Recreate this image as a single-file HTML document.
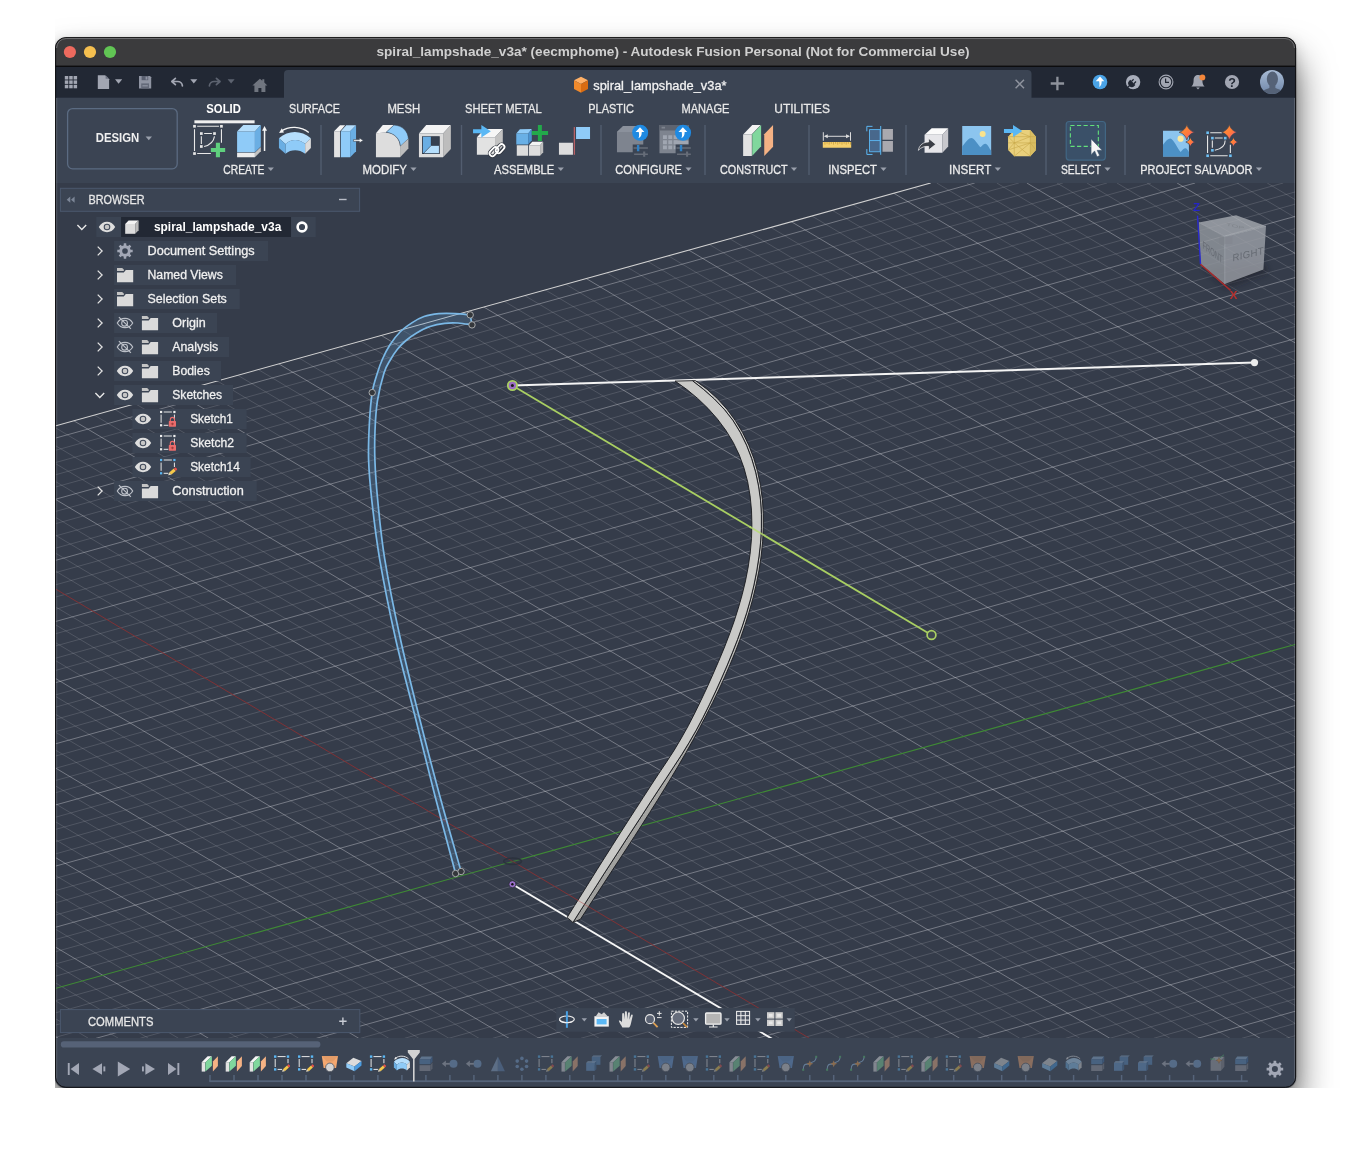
<!DOCTYPE html>
<html lang="en"><head><meta charset="utf-8"><title>spiral_lampshade_v3a* - Autodesk Fusion Personal</title>
<style>
html,body{margin:0;padding:0;background:#fff;width:1351px;height:1162px;overflow:hidden}
#clip{position:absolute;left:55px;top:0;width:1296px;height:1087.7px;overflow:hidden}
#shadow{position:absolute;left:0.4px;top:37.5px;width:1240.5px;height:1050px;border-radius:10.5px;
 box-shadow:0 22px 36px 0 rgba(0,0,0,.66), 0 3px 14px rgba(0,0,0,.14), 0 0 1.5px rgba(0,0,0,.6);background:#3b4453}
svg{position:absolute;left:0;top:0;will-change:transform}
text{font-family:"Liberation Sans", sans-serif;white-space:pre}
text.n{stroke-width:.28px}
</style></head><body>
<div id="clip"><div id="shadow"></div></div>
<svg width="1351" height="1162" viewBox="0 0 1351 1162">
<defs><clipPath id="win"><rect x="55.2" y="37.3" width="1240.8" height="1050.4" rx="10.5" ry="10.5"/></clipPath><linearGradient id="avg" x1="0" y1="0" x2="0" y2="1"><stop offset="0" stop-color="#a9bcd6"/><stop offset="1" stop-color="#6f86a8"/></linearGradient></defs>
<g clip-path="url(#win)">
<rect x="55" y="37" width="1241" height="30" fill="#3b3b3d"/>
<rect x="55" y="65.6" width="1241" height="1.4" fill="#0c0c0e"/>
<rect x="55" y="67" width="1241" height="31" fill="#222834"/>
<rect x="55" y="97.7" width="1241" height="86" fill="#3b4453"/>
<path d="M284 98 V74 a4 4 0 0 1 4 -4 H1027.5 a4 4 0 0 1 4 4 V98 Z" fill="#3b4453"/>
<rect x="55" y="183" width="1241" height="856" fill="#353c4a"/>
<clipPath id="cv"><rect x="55" y="183" width="1241" height="855.3"/></clipPath>
<linearGradient id="sideg" gradientUnits="userSpaceOnUse" x1="0" y1="381" x2="0" y2="921"><stop offset="0" stop-color="#c6c6c4"/><stop offset=".45" stop-color="#bcbcba"/><stop offset=".7" stop-color="#a6a6a4"/><stop offset="1" stop-color="#9e9e9c"/></linearGradient>
<g clip-path="url(#cv)">
<clipPath id="gridclip"><polygon points="55,426.01 1296,81.63 1296,1038.3 55,1038.3"/></clipPath>
<g clip-path="url(#gridclip)" fill="none">
<path d="M55 450.46L1018.83 183M55 462.69L1062.9 183M55 474.92L1106.97 183M55 487.15L1151.04 183M55 511.61L1239.17 183M55 523.84L1283.24 183M55 536.07L1296 191.69M55 548.3L1296 203.92M55 572.75L1296 228.38M55 584.98L1296 240.6M55 597.21L1296 252.83M55 609.44L1296 265.06M55 633.9L1296 289.52M55 646.13L1296 301.75M55 658.36L1296 313.98M55 670.59L1296 326.21M55 695.04L1296 350.67M55 707.27L1296 362.89M55 719.5L1296 375.12M55 731.73L1296 387.35M55 756.19L1296 411.81M55 768.42L1296 424.04M55 780.65L1296 436.27M55 792.88L1296 448.5M55 817.33L1296 472.96M55 829.56L1296 485.19M55 841.79L1296 497.41M55 854.02L1296 509.64M55 878.48L1296 534.1M55 890.71L1296 546.33M55 902.94L1296 558.56M55 915.17L1296 570.79M55 939.62L1296 595.25M55 951.85L1296 607.47M55 964.08L1296 619.7M55 976.31L1296 631.93M55 1000.77L1296 656.39M55 1013.0L1296 668.62M55 1025.23L1296 680.85M55 1037.46L1296 693.08M140.09 1038.3L1296 717.54M184.16 1038.3L1296 729.76M228.23 1038.3L1296 741.99M272.3 1038.3L1296 754.22M360.44 1038.3L1296 778.68M404.5 1038.3L1296 790.91M448.57 1038.3L1296 803.14M492.64 1038.3L1296 815.37M580.78 1038.3L1296 839.83M624.85 1038.3L1296 852.05M668.92 1038.3L1296 864.28M712.98 1038.3L1296 876.51M801.12 1038.3L1296 900.97M845.19 1038.3L1296 913.2M889.26 1038.3L1296 925.43M933.33 1038.3L1296 937.66M1021.46 1038.3L1296 962.12M1065.53 1038.3L1296 974.35M1109.6 1038.3L1296 986.57M1153.67 1038.3L1296 998.8M1241.81 1038.3L1296 1023.26M1285.87 1038.3L1296 1035.49M55 1018.41L88.37 1038.3M55 1000.51L118.41 1038.3M55 982.6L148.46 1038.3M55 964.69L178.5 1038.3M55 928.88L238.59 1038.3M55 910.97L268.64 1038.3M55 893.07L298.68 1038.3M55 875.16L328.73 1038.3M55 839.35L388.82 1038.3M55 821.44L418.86 1038.3M55 803.53L448.91 1038.3M55 785.63L478.95 1038.3M55 749.81L539.04 1038.3M55 731.91L569.09 1038.3M55 714.0L599.13 1038.3M55 696.09L629.17 1038.3M55 660.28L689.26 1038.3M55 642.37L719.31 1038.3M55 624.46L749.35 1038.3M55 606.56L779.4 1038.3M55 570.74L839.49 1038.3M55 552.84L869.53 1038.3M55 534.93L899.58 1038.3M55 517.02L929.62 1038.3M55 481.21L989.71 1038.3M55 463.3L1019.76 1038.3M55 445.4L1049.8 1038.3M55 427.49L1079.85 1038.3M55 391.68L1139.94 1038.3M55 373.77L1169.98 1038.3M55 355.86L1200.03 1038.3M55 337.96L1230.07 1038.3M55 302.14L1290.16 1038.3M55 284.24L1296 1023.87M55 266.33L1296 1005.97M55 248.42L1296 988.06M55 212.61L1296 952.25M55 194.7L1296 934.34M65.41 183L1296 916.43M95.45 183L1296 898.53M155.54 183L1296 862.71M185.59 183L1296 844.8M215.63 183L1296 826.9M245.68 183L1296 808.99M305.77 183L1296 773.18M335.81 183L1296 755.27M365.86 183L1296 737.36M395.9 183L1296 719.46M455.99 183L1296 683.64M486.04 183L1296 665.74M516.08 183L1296 647.83M546.13 183L1296 629.92M606.22 183L1296 594.11M636.26 183L1296 576.2M666.31 183L1296 558.3M696.35 183L1296 540.39M756.44 183L1296 504.58M786.49 183L1296 486.67M816.53 183L1296 468.76M846.58 183L1296 450.86M906.67 183L1296 415.04M936.71 183L1296 397.14M966.76 183L1296 379.23M996.8 183L1296 361.32M1056.89 183L1296 325.51M1086.94 183L1296 307.6M1116.98 183L1296 289.7M1147.03 183L1296 271.79M1207.12 183L1296 235.98M1237.16 183L1296 218.07M1267.2 183L1296 200.16" stroke="#d2d4d8" stroke-opacity=".175" stroke-width="1"/>
<path d="M55 438.23L974.76 183M55 499.38L1195.11 183M55 560.52L1296 216.15M55 621.67L1296 277.29M55 682.81L1296 338.44M55 743.96L1296 399.58M55 805.1L1296 460.73M55 866.25L1296 521.87M55 927.39L1296 583.02M96.03 1038.3L1296 705.31M316.37 1038.3L1296 766.45M536.71 1038.3L1296 827.6M757.05 1038.3L1296 888.74M977.39 1038.3L1296 949.89M1197.74 1038.3L1296 1011.03M55 1036.32L58.32 1038.3M55 946.79L208.55 1038.3M55 857.25L358.77 1038.3M55 767.72L509.0 1038.3M55 678.18L659.22 1038.3M55 499.12L959.67 1038.3M55 409.58L1109.89 1038.3M55 320.05L1260.12 1038.3M55 230.52L1296 970.15M125.5 183L1296 880.62M275.72 183L1296 791.08M425.95 183L1296 701.55M576.17 183L1296 612.02M726.4 183L1296 522.48M876.62 183L1296 432.95M1026.85 183L1296 343.42M1177.07 183L1296 253.88" stroke="#e4e5e8" stroke-opacity=".37" stroke-width="1"/>
<path d="M55 988.54L1296 644.16" stroke="#3f8a35" stroke-width="1.1"/>
<path d="M55 588.65L809.44 1038.3" stroke="#843034" stroke-width=".95"/>
</g>
<path d="M55 426.01L930.7 183" stroke="#d2d2d2" stroke-width="1.1" fill="none"/>
<ellipse cx="512.5999999999999" cy="861.3" rx="9" ry="3.3" fill="#2b313c" fill-opacity=".25" stroke="#2b313c" stroke-width="1.5" opacity=".9"/>
<path d="M470.2 314.9C467.7 314.7 460.2 313.8 455.0 313.6C449.8 313.4 444.0 313.2 438.8 313.7C433.6 314.2 428.4 315.0 424.0 316.5C419.6 318.0 416.2 320.0 412.2 322.6C408.2 325.2 403.7 328.3 400.0 332.0C396.3 335.7 392.9 340.3 390.0 344.8C387.1 349.3 384.6 354.3 382.5 359.0C380.4 363.7 379.1 367.3 377.4 372.9C375.7 378.5 373.5 384.2 372.2 392.6C370.9 401.0 370.0 411.8 369.4 423.0C368.8 434.2 368.2 447.3 368.6 460.0C369.0 472.7 369.9 482.9 371.7 499.4C373.5 515.9 375.7 535.7 379.6 558.8C383.6 581.9 389.5 611.6 395.4 638.0C401.3 664.4 408.6 690.7 415.2 717.0C421.8 743.3 428.3 769.9 435.0 796.0C441.7 822.1 452.2 860.6 455.6 873.5L461.1 871.5C457.6 858.9 446.8 821.8 439.8 796.0C432.8 770.2 425.8 743.3 419.2 717.0C412.6 690.7 405.9 664.4 400.2 638.0C394.4 611.6 388.5 582.0 384.7 558.8C380.9 535.6 379.2 515.5 377.6 499.0C376.0 482.5 375.3 471.4 374.9 460.0C374.5 448.6 374.6 440.4 375.0 430.6C375.4 420.8 375.9 410.6 377.4 401.0C378.9 391.4 381.9 379.6 384.0 372.9C386.1 366.1 387.8 364.4 390.0 360.5C392.2 356.6 394.7 352.5 397.4 349.2C400.1 345.9 402.8 343.2 406.0 340.5C409.2 337.8 412.6 335.2 416.6 332.9C420.6 330.6 425.3 328.1 430.0 326.5C434.7 324.9 440.0 323.9 444.7 323.3C449.4 322.7 453.4 322.7 458.0 323.0C462.6 323.3 469.7 324.6 472.0 324.9Z" fill="#5b8fbf" fill-opacity=".28" stroke="none"/>
<path d="M470.2 314.9C467.7 314.7 460.2 313.8 455.0 313.6C449.8 313.4 444.0 313.2 438.8 313.7C433.6 314.2 428.4 315.0 424.0 316.5C419.6 318.0 416.2 320.0 412.2 322.6C408.2 325.2 403.7 328.3 400.0 332.0C396.3 335.7 392.9 340.3 390.0 344.8C387.1 349.3 384.6 354.3 382.5 359.0C380.4 363.7 379.1 367.3 377.4 372.9C375.7 378.5 373.5 384.2 372.2 392.6C370.9 401.0 370.0 411.8 369.4 423.0C368.8 434.2 368.2 447.3 368.6 460.0C369.0 472.7 369.9 482.9 371.7 499.4C373.5 515.9 375.7 535.7 379.6 558.8C383.6 581.9 389.5 611.6 395.4 638.0C401.3 664.4 408.6 690.7 415.2 717.0C421.8 743.3 428.3 769.9 435.0 796.0C441.7 822.1 452.2 860.6 455.6 873.5" fill="none" stroke="#7ab8e6" stroke-width="1.7"/>
<path d="M472.0 324.9C469.7 324.6 462.6 323.3 458.0 323.0C453.4 322.7 449.4 322.7 444.7 323.3C440.0 323.9 434.7 324.9 430.0 326.5C425.3 328.1 420.6 330.6 416.6 332.9C412.6 335.2 409.2 337.8 406.0 340.5C402.8 343.2 400.1 345.9 397.4 349.2C394.7 352.5 392.2 356.6 390.0 360.5C387.8 364.4 386.1 366.1 384.0 372.9C381.9 379.6 378.9 391.4 377.4 401.0C375.9 410.6 375.4 420.8 375.0 430.6C374.6 440.4 374.5 448.6 374.9 460.0C375.3 471.4 376.0 482.5 377.6 499.0C379.2 515.5 380.9 535.6 384.7 558.8C388.5 582.0 394.4 611.6 400.2 638.0C405.9 664.4 412.6 690.7 419.2 717.0C425.8 743.3 432.8 770.2 439.8 796.0C446.8 821.8 457.6 858.9 461.1 871.5" fill="none" stroke="#7ab8e6" stroke-width="1.7"/>
<path d="M470.2 314.9L472 324.9M455.6 873.5L461.1 871.5" fill="none" stroke="#7ab8e6" stroke-width="1.7"/>
<circle cx="470.2" cy="314.9" r="3.2" fill="#34373b" stroke="#a8aaac" stroke-width="1"/>
<circle cx="472" cy="324.9" r="3.2" fill="#34373b" stroke="#a8aaac" stroke-width="1"/>
<circle cx="372.2" cy="392.6" r="3.2" fill="#34373b" stroke="#a8aaac" stroke-width="1"/>
<circle cx="455.6" cy="873.5" r="3.2" fill="#34373b" stroke="#a8aaac" stroke-width="1"/>
<circle cx="461.1" cy="871.5" r="3.2" fill="#34373b" stroke="#a8aaac" stroke-width="1"/>
<path d="M512.4 385.5L1254.5 362.6" stroke="#f4f4f4" stroke-width="2" fill="none"/>
<circle cx="1254.5" cy="362.6" r="3.6" fill="#ececec"/>
<path d="M512.4 385.5L931.5 635" stroke="#a9cf62" stroke-width="1.8" fill="none"/>
<path d="M512.4 884.3L780 1043.5" stroke="#f6f6f6" stroke-width="1.9" fill="none"/>
<path d="M692.4 380.7 L703.6 389.5 L714.3 399.0 L724.2 409.3 L732.9 420.4 L740.3 432.5 L746.5 445.2 L751.6 458.5 L755.6 472.2 L758.5 486.1 L760.5 500.2 L761.4 514.4 L761.4 528.7 L760.5 542.9 L758.9 557.0 L756.7 571.1 L753.9 585.1 L750.6 598.9 L746.7 612.6 L742.3 626.1 L737.5 639.5 L732.3 652.8 L726.9 665.9 L721.2 679.0 L715.3 692.0 L709.2 704.9 L702.9 717.6 L696.2 730.2 L689.1 742.5 L681.7 754.6 L673.9 766.5 L666.1 778.4 L658.2 790.3 L650.4 802.2 L642.7 814.2 L634.9 826.1 L627.1 838.0 L619.4 850.0 L611.7 861.9 L603.9 873.9 L596.3 885.9 L588.6 897.9 L580.9 909.9 L573.3 921.9 L572.9 922.4 L580.4 919.3 L588.1 907.4 L595.8 895.6 L603.5 883.8 L611.2 872.0 L619.0 860.1 L626.7 848.3 L634.4 836.5 L642.0 824.6 L649.6 812.7 L657.1 800.8 L664.5 788.8 L671.8 776.7 L679.0 764.6 L686.1 752.4 L693.0 740.1 L699.7 727.8 L706.2 715.3 L712.6 702.7 L718.7 690.0 L724.6 677.2 L730.2 664.2 L735.6 651.1 L740.6 637.9 L745.2 624.5 L749.4 611.0 L753.2 597.4 L756.4 583.7 L759.1 569.9 L761.2 555.9 L762.6 541.8 L763.3 527.7 L763.3 513.5 L762.4 499.5 L760.5 485.5 L757.7 471.8 L753.8 458.3 L748.8 445.2 L742.6 432.5 L735.3 420.5 L727.0 409.2 L717.5 398.7 L707.0 389.2 L695.5 380.7Z" fill="url(#sideg)" stroke="#17191d" stroke-width=".9" stroke-linejoin="round"/>
<path d="M675.1 381.1 L686.6 389.3 L697.6 398.4 L707.9 408.3 L717.3 418.9 L725.8 430.3 L733.2 442.4 L739.3 455.1 L744.1 468.3 L747.7 481.9 L750.1 495.9 L751.5 510.1 L751.9 524.5 L751.5 538.8 L750.2 553.0 L748.2 567.0 L745.5 580.9 L742.2 594.6 L738.3 608.2 L734.0 621.7 L729.2 635.0 L724.1 648.2 L718.6 661.3 L712.9 674.4 L707.1 687.4 L701.0 700.3 L694.8 713.0 L688.3 725.7 L681.4 738.0 L674.2 750.2 L666.5 762.0 L658.6 773.8 L650.8 785.7 L643.1 797.6 L635.4 809.5 L627.7 821.4 L620.0 833.4 L612.4 845.4 L604.8 857.4 L597.2 869.4 L589.7 881.4 L582.2 893.5 L574.6 905.5 L567.1 917.5 L572.9 922.4 L573.3 921.9 L580.9 909.9 L588.6 897.9 L596.3 885.9 L603.9 873.9 L611.7 861.9 L619.4 850.0 L627.1 838.0 L634.9 826.1 L642.7 814.2 L650.4 802.2 L658.2 790.3 L666.1 778.4 L673.9 766.5 L681.7 754.6 L689.1 742.5 L696.2 730.2 L702.9 717.6 L709.2 704.9 L715.3 692.0 L721.2 679.0 L726.9 665.9 L732.3 652.8 L737.5 639.5 L742.3 626.1 L746.7 612.6 L750.6 598.9 L753.9 585.1 L756.7 571.1 L758.9 557.0 L760.5 542.9 L761.4 528.7 L761.4 514.4 L760.5 500.2 L758.5 486.1 L755.6 472.2 L751.6 458.5 L746.5 445.2 L740.3 432.5 L732.9 420.4 L724.2 409.3 L714.3 399.0 L703.6 389.5 L692.4 380.7Z" fill="#c9c9c7" stroke="#17191d" stroke-width=".9" stroke-linejoin="round"/>
<path d="M577 899.8L589.4 907.2" stroke="#b84848" stroke-width=".9" opacity=".55"/>
<path d="M749.5 526.6L764 535.3" stroke="#b6dc6e" stroke-width="1.8" opacity=".8"/>
<circle cx="512.4" cy="385.5" r="4.6" fill="#9b6bc4" stroke="#a9cf62" stroke-width="1.8"/><circle cx="512.4" cy="385.5" r="1.5" fill="#1a1a1a"/>
<circle cx="931.5" cy="635" r="4.4" fill="#404850" stroke="#a9cf62" stroke-width="1.7"/>
<circle cx="512.4" cy="884.2" r="3.5" fill="#9b70cc" stroke="#262a33" stroke-width=".8"/><circle cx="512.4" cy="884.2" r="1.2" fill="#111"/>
</g>
<rect x="55" y="1038" width="1241" height="50" fill="#3b4453"/>
<circle cx="69.9" cy="52" r="6.1" fill="#ed6a5e"/>
<circle cx="90" cy="52" r="6.1" fill="#f5bf4f"/>
<circle cx="110" cy="52" r="6.1" fill="#61c554"/>
<text x="673.0" y="56.1" font-size="13" font-weight="bold" fill="#d0d0d0" text-anchor="middle" textLength="593.0" lengthAdjust="spacingAndGlyphs">spiral_lampshade_v3a* (eecmphome) - Autodesk Fusion Personal (Not for Commercial Use)</text>
<rect x="64.8" y="76.0" width="3.5" height="3.5" fill="#a2a6b2"/>
<rect x="64.8" y="80.4" width="3.5" height="3.5" fill="#a2a6b2"/>
<rect x="64.8" y="84.8" width="3.5" height="3.5" fill="#a2a6b2"/>
<rect x="69.2" y="76.0" width="3.5" height="3.5" fill="#a2a6b2"/>
<rect x="69.2" y="80.4" width="3.5" height="3.5" fill="#a2a6b2"/>
<rect x="69.2" y="84.8" width="3.5" height="3.5" fill="#a2a6b2"/>
<rect x="73.6" y="76.0" width="3.5" height="3.5" fill="#a2a6b2"/>
<rect x="73.6" y="80.4" width="3.5" height="3.5" fill="#a2a6b2"/>
<rect x="73.6" y="84.8" width="3.5" height="3.5" fill="#a2a6b2"/>
<path d="M97.8 75.2 h7.3 l4 4 v9.8 h-11.3z" fill="#a2a6b2"/><path d="M105.6 75.2 v3.6 h3.5z" fill="#6d7280"/>
<path d="M115 79.2 h7.2 l-3.6 4.6z" fill="#a2a6b2"/>
<path d="M139 76 h11 l1.2 1.2 v11.2 h-12.2z" fill="#8f94a2"/><rect x="141.6" y="76" width="6.6" height="4.2" fill="#5a6070"/><rect x="145.6" y="76.6" width="1.8" height="3" fill="#8f94a2"/><rect x="141.2" y="83.4" width="7.8" height="5" fill="#646a79"/><rect x="142.4" y="85.2" width="5.4" height="1.2" fill="#8f94a2"/>
<path d="M175.4 78.3 l-3.6 3.2 3.6 3.2 M172.2 81.5 h5.2 a4.8 4.8 0 0 1 5 4.4" fill="none" stroke="#a2a6b2" stroke-width="1.7" stroke-linecap="round" stroke-linejoin="round"/>
<path d="M190.3 79.2 h7 l-3.5 4.4z" fill="#a2a6b2"/>
<path d="M216.4 78.3 l3.6 3.2 -3.6 3.2 M219.6 81.5 h-5.2 a4.8 4.8 0 0 0 -5 4.4" fill="none" stroke="#5d6370" stroke-width="1.7" stroke-linecap="round" stroke-linejoin="round"/>
<path d="M227.6 79.2 h7 l-3.5 4.4z" fill="#5d6370"/>
<path d="M252.4 85.4 l7.5 -6.7 2.4 2.1 v-1.6 h2 v3.4 l3.1 2.8 h-2 v6.6 h-4 v-4 h-3 v4 h-4 v-6.6z" fill="#70757f"/>
<text x="593.3" y="89.7" font-size="12.5" font-weight="normal" fill="#f2f2f2" text-anchor="start" textLength="133.2" lengthAdjust="spacingAndGlyphs" class="n" stroke="#f2f2f2">spiral_lampshade_v3a*</text>
<g transform="translate(574,76.7)"><path d="M7 0 L14 3.6 L7 7.4 L0 3.6Z" fill="#ffb066"/><path d="M0 3.6 L7 7.4 V16 L0 12.2Z" fill="#f08a2c"/><path d="M14 3.6 L7 7.4 V16 L14 12.2Z" fill="#d96c12"/></g>
<path d="M1015.6 79.8 l8.4 8.4 M1024 79.8 l-8.4 8.4" stroke="#8d929d" stroke-width="1.5" fill="none"/>
<path d="M1057.4 76.8 v13.4 M1050.7 83.5 h13.4" stroke="#8f939c" stroke-width="2.3" fill="none"/>
<circle cx="1100" cy="82" r="7.3" fill="#4aa3e6"/><path d="M1100 76.6 l4.3 4.6 h-2.6 c0 3 -0.6 4.6 -2.6 5.8 c0.6 -1.8 0.4 -3.6 0 -5.8 h-3.4z" fill="#fff"/>
<circle cx="1133.1" cy="82.1" r="7.2" fill="#a9aebb"/>
<g transform="translate(1132.4 82.8) rotate(45)" fill="#222834"><path d="M-3.6 -0.6 h7.2 v1.4 a3.6 3.6 0 0 1 -7.2 0z"/><rect x="-2.3" y="-3.4" width="1.3" height="3"/><rect x="1" y="-3.4" width="1.3" height="3"/><rect x="-0.7" y="3.6" width="1.4" height="4.4"/></g>
<circle cx="1166" cy="82" r="6.9" fill="none" stroke="#a2a6b2" stroke-width="1.1"/><circle cx="1166" cy="82" r="5.2" fill="#a2a6b2"/><path d="M1165.6 78.4 v4 h3.4" stroke="#222834" stroke-width="1.2" fill="none"/>
<path d="M1198 75 c-3.2 0 -4.4 2.6 -4.4 5.4 c0 3.2 -0.8 4.6 -2.2 6 h13.2 c-1.4 -1.4 -2.2 -2.8 -2.2 -6 c0 -2.8 -1.2 -5.4 -4.4 -5.4z" fill="#a2a6b2"/><path d="M1196.2 87.6 h3.6 l-1.8 1.8z" fill="#a2a6b2"/><circle cx="1202.4" cy="77.4" r="2.9" fill="#f5873a"/>
<circle cx="1232" cy="82" r="7.1" fill="#a2a6b2"/>
<text x="1232" y="86.6" font-size="12.5" font-weight="bold" fill="#222834" text-anchor="middle">?</text>
<clipPath id="avc"><circle cx="1272" cy="82" r="12"/></clipPath><circle cx="1272" cy="82" r="12" fill="url(#avg)"/><g clip-path="url(#avc)" fill="#556277"><ellipse cx="1272.4" cy="79" rx="5.6" ry="7.4"/><path d="M1269.4 84 h6 v4 c2 1 6 1.6 7.6 4 v4 h-21 v-4 c1.6 -2.4 5.4 -3 7.4 -4z"/></g>
<text x="223.6" y="112.8" font-size="12" font-weight="bold" fill="#ffffff" text-anchor="middle" textLength="34.5" lengthAdjust="spacingAndGlyphs">SOLID</text>
<rect x="194.4" y="120.3" width="60.2" height="3" fill="#f0f0f0"/>
<text x="289.0" y="112.8" font-size="12" font-weight="normal" fill="#e8e8e8" text-anchor="start" textLength="51.0" lengthAdjust="spacingAndGlyphs" class="n" stroke="#e8e8e8">SURFACE</text>
<text x="387.4" y="112.8" font-size="12" font-weight="normal" fill="#e8e8e8" text-anchor="start" textLength="32.8" lengthAdjust="spacingAndGlyphs" class="n" stroke="#e8e8e8">MESH</text>
<text x="465.0" y="112.8" font-size="12" font-weight="normal" fill="#e8e8e8" text-anchor="start" textLength="76.8" lengthAdjust="spacingAndGlyphs" class="n" stroke="#e8e8e8">SHEET METAL</text>
<text x="588.3" y="112.8" font-size="12" font-weight="normal" fill="#e8e8e8" text-anchor="start" textLength="45.7" lengthAdjust="spacingAndGlyphs" class="n" stroke="#e8e8e8">PLASTIC</text>
<text x="681.5" y="112.8" font-size="12" font-weight="normal" fill="#e8e8e8" text-anchor="start" textLength="48.0" lengthAdjust="spacingAndGlyphs" class="n" stroke="#e8e8e8">MANAGE</text>
<text x="774.3" y="112.8" font-size="12" font-weight="normal" fill="#e8e8e8" text-anchor="start" textLength="55.7" lengthAdjust="spacingAndGlyphs" class="n" stroke="#e8e8e8">UTILITIES</text>
<rect x="67.6" y="108.6" width="109.6" height="60.2" rx="5" fill="none" stroke="#5b6b82" stroke-width="1.3"/>
<text x="117.5" y="142.0" font-size="12" font-weight="bold" fill="#f0f0f0" text-anchor="middle" textLength="43.5" lengthAdjust="spacingAndGlyphs">DESIGN</text>
<path d="M145.6 136.6 h6.4 l-3.2 3.6 z" fill="#9aa0ac"/>
<text x="223.3" y="173.8" font-size="12" font-weight="normal" fill="#ececec" text-anchor="start" textLength="41.0" lengthAdjust="spacingAndGlyphs" class="n" stroke="#ececec">CREATE</text>
<path d="M267.7 167.4 h6.2 l-3.1 3.6 z" fill="#9aa0ac"/>
<text x="362.5" y="173.8" font-size="12" font-weight="normal" fill="#ececec" text-anchor="start" textLength="44.5" lengthAdjust="spacingAndGlyphs" class="n" stroke="#ececec">MODIFY</text>
<path d="M410.4 167.4 h6.2 l-3.1 3.6 z" fill="#9aa0ac"/>
<text x="494.0" y="173.8" font-size="12" font-weight="normal" fill="#ececec" text-anchor="start" textLength="60.3" lengthAdjust="spacingAndGlyphs" class="n" stroke="#ececec">ASSEMBLE</text>
<path d="M557.7 167.4 h6.2 l-3.1 3.6 z" fill="#9aa0ac"/>
<text x="615.3" y="173.8" font-size="12" font-weight="normal" fill="#ececec" text-anchor="start" textLength="66.7" lengthAdjust="spacingAndGlyphs" class="n" stroke="#ececec">CONFIGURE</text>
<path d="M685.4 167.4 h6.2 l-3.1 3.6 z" fill="#9aa0ac"/>
<text x="720.0" y="173.8" font-size="12" font-weight="normal" fill="#ececec" text-anchor="start" textLength="67.5" lengthAdjust="spacingAndGlyphs" class="n" stroke="#ececec">CONSTRUCT</text>
<path d="M790.9 167.4 h6.2 l-3.1 3.6 z" fill="#9aa0ac"/>
<text x="828.2" y="173.8" font-size="12" font-weight="normal" fill="#ececec" text-anchor="start" textLength="48.8" lengthAdjust="spacingAndGlyphs" class="n" stroke="#ececec">INSPECT</text>
<path d="M880.4 167.4 h6.2 l-3.1 3.6 z" fill="#9aa0ac"/>
<text x="949.0" y="173.8" font-size="12" font-weight="normal" fill="#ececec" text-anchor="start" textLength="42.3" lengthAdjust="spacingAndGlyphs" class="n" stroke="#ececec">INSERT</text>
<path d="M994.7 167.4 h6.2 l-3.1 3.6 z" fill="#9aa0ac"/>
<text x="1061.0" y="173.8" font-size="12" font-weight="normal" fill="#ececec" text-anchor="start" textLength="40.0" lengthAdjust="spacingAndGlyphs" class="n" stroke="#ececec">SELECT</text>
<path d="M1104.4 167.4 h6.2 l-3.1 3.6 z" fill="#9aa0ac"/>
<text x="1140.3" y="173.8" font-size="12" font-weight="normal" fill="#ececec" text-anchor="start" textLength="112.2" lengthAdjust="spacingAndGlyphs" class="n" stroke="#ececec">PROJECT SALVADOR</text>
<path d="M1255.9 167.4 h6.2 l-3.1 3.6 z" fill="#9aa0ac"/>
<rect x="320.3" y="125" width="1.4" height="50" fill="#525d6f"/>
<rect x="460.8" y="125" width="1.4" height="50" fill="#525d6f"/>
<rect x="600.3" y="125" width="1.4" height="50" fill="#525d6f"/>
<rect x="704.3" y="125" width="1.4" height="50" fill="#525d6f"/>
<rect x="808.3" y="125" width="1.4" height="50" fill="#525d6f"/>
<rect x="905.3" y="125" width="1.4" height="50" fill="#525d6f"/>
<rect x="1045.3" y="125" width="1.4" height="50" fill="#525d6f"/>
<rect x="1124.3" y="125" width="1.4" height="50" fill="#525d6f"/>
<path d="M 197.19 126.29 L 218.95 126.29 M 194.50 129.19 L 194.50 150.95 M 197.19 153.54 L 210.87 153.54 M 221.44 129.19 L 221.44 142.87" stroke="#e8e8e8" stroke-width="1.1" fill="none"/>
<rect x="193.15" y="124.94" width="2.7" height="2.7" fill="#e8e8e8"/>
<rect x="220.09" y="124.94" width="2.7" height="2.7" fill="#e8e8e8"/>
<rect x="193.15" y="152.20" width="2.7" height="2.7" fill="#e8e8e8"/>
<path d="M 204.13 133.54 L 211.91 133.54 M 201.34 136.34 L 201.34 143.91 M 204.13 146.50 C 210.35 144.94 213.77 140.80 214.50 136.34" stroke="#e8e8e8" stroke-width="1.1" fill="none"/>
<rect x="199.99" y="132.20" width="2.7" height="2.7" fill="#e8e8e8"/>
<rect x="213.15" y="132.20" width="2.7" height="2.7" fill="#e8e8e8"/>
<rect x="199.99" y="145.15" width="2.7" height="2.7" fill="#e8e8e8"/>
<path d="M 217.92 142.87 L 217.92 157.17 M 210.87 150.02 L 225.17 150.02" stroke="#5fd07e" stroke-width="4.1" fill="none"/>
<path d="M 237.09 131.47 L 243.31 125.05 L 260.82 125.05 L 254.91 131.47 Z" fill="#b5defc"/>
<path d="M 237.09 131.47 L 254.91 131.47 L 254.91 152.20 L 237.09 152.20 Z" fill="#8fcbf8"/>
<path d="M 254.91 131.47 L 260.82 125.05 L 260.82 146.50 L 254.91 152.20 Z" fill="#6aaee3"/>
<path d="M 237.09 152.72 L 254.91 152.72 L 254.91 157.17 L 237.09 157.17 Z" fill="#ececec"/>
<path d="M 254.91 152.72 L 260.82 147.02 L 260.82 151.37 L 254.91 157.17 Z" fill="#c2c2c2"/>
<path d="M 264.55 150.95 L 264.55 129.40" stroke="#f4f4f4" stroke-width="1.5" fill="none"/>
<path d="M 264.55 126.08 L 267.04 130.64 L 262.06 130.64 Z" fill="#f4f4f4"/>
<path d="M 278.95 138.21 C 288.59 129.92 301.03 129.92 310.87 138.21 L 305.17 143.91 C 298.95 138.73 291.18 138.73 285.48 143.91 Z" fill="#b5defc"/>
<path d="M 285.48 143.91 C 291.18 138.73 298.95 138.73 305.17 143.91 L 305.17 153.75 C 298.95 149.09 291.18 149.09 285.48 153.75 Z" fill="#8fcbf8"/>
<path d="M 278.95 138.21 L 285.48 143.91 L 285.48 153.75 L 278.95 148.05 Z" fill="#6aaee3"/>
<path d="M 305.17 143.91 L 310.87 138.21 L 310.87 148.05 L 305.17 153.75 Z" fill="#dcdcdc"/>
<path d="M 308.80 132.51 C 301.03 125.77 288.59 125.77 281.13 131.26" stroke="#f4f4f4" stroke-width="1.3" fill="none"/>
<path d="M 279.06 133.03 L 281.85 128.36 L 283.93 132.51 Z" fill="#f4f4f4"/>
<path d="M 334.08 131.26 L 339.99 125.25 L 345.17 125.25 L 339.99 131.26 Z" fill="#f3f3f3"/>
<path d="M 334.08 131.26 L 339.99 131.26 L 339.99 157.17 L 334.08 157.17 Z" fill="#e2e2e2"/>
<path d="M 340.82 131.26 L 346.21 125.25 L 356.05 125.25 L 350.15 131.26 Z" fill="#b5defc"/>
<path d="M 340.82 131.26 L 350.15 131.26 L 350.15 157.17 L 340.82 157.17 Z" fill="#8fcbf8"/>
<path d="M 350.15 131.26 L 356.05 125.25 L 356.05 151.16 L 350.15 157.17 Z" fill="#6aaee3"/>
<path d="M 353.46 139.55 L 359.37 139.55 L 359.37 138.00 L 363.31 140.38 L 359.37 142.87 L 359.37 141.32 L 353.46 141.32 Z" fill="#f6f6f6" stroke="#3b4453" stroke-width=".6"/>
<path d="M 375.95 133.34 L 382.79 125.05 L 393.88 125.05 L 386.10 132.51 Z" fill="#f3f3f3"/>
<path d="M 375.95 133.34 L 386.10 132.51 C 394.39 133.03 399.58 138.73 400.09 146.50 L 400.09 157.17 L 375.95 157.17 Z" fill="#dddddd"/>
<path d="M 386.10 132.30 L 393.88 125.05 C 402.68 125.46 407.87 131.47 408.38 138.73 L 400.40 146.19 C 399.78 138.73 394.39 133.03 386.10 132.30 Z" fill="#8fcbf8" stroke="#3b4453" stroke-width=".5"/>
<path d="M 400.09 146.50 L 408.38 138.73 L 408.38 148.57 L 400.09 157.17 Z" fill="#bdbdbd"/>
<path d="M 418.95 133.54 L 426.21 125.05 L 450.87 125.05 L 443.10 133.54 Z" fill="#f3f3f3"/>
<path d="M 418.95 133.54 L 443.10 133.54 L 443.10 157.17 L 418.95 157.17 Z" fill="#dddddd"/>
<path d="M 443.10 133.54 L 450.87 125.05 L 450.87 149.09 L 443.10 157.17 Z" fill="#bdbdbd"/>
<path d="M 422.06 136.13 L 439.78 136.13 L 439.78 153.96 L 422.06 153.96 Z" fill="#2e3746"/>
<path d="M 422.89 136.86 L 430.87 136.86 L 430.87 145.46 L 423.62 153.03 L 422.89 153.03 Z" fill="#6aaee3"/>
<path d="M 423.93 153.23 L 431.18 145.77 L 438.95 145.77 L 438.95 153.23 Z" fill="#b5defc"/>
<path d="M 431.28 136.86 L 438.95 136.86 L 438.95 145.25 L 431.28 145.25 Z" fill="#364050"/>
<path d="M 476.88 137.17 L 484.65 128.88 L 502.79 128.88 L 495.02 137.17 Z" fill="#f6f6f6"/>
<path d="M 476.88 137.17 L 495.02 137.17 L 495.02 154.79 L 476.88 154.79 Z" fill="#e2e2e2"/>
<path d="M 495.02 137.17 L 502.79 128.88 L 502.79 146.50 L 495.02 154.79 Z" fill="#c2c2c2"/>
<path d="M 473.05 129.19 L 481.34 129.19 L 481.34 125.05 L 490.87 131.26 L 481.34 137.48 L 481.34 133.34 L 473.05 133.34 Z" fill="#5bb8f5"/>
<rect x="488.80" y="148.90" width="10.2" height="5.6" rx="2.8" fill="none" stroke="#30353f" stroke-width="3.4" transform="rotate(-47 493.90 151.70)"/>
<rect x="495.00" y="145.90" width="10.2" height="5.6" rx="2.8" fill="none" stroke="#30353f" stroke-width="3.4" transform="rotate(-47 500.10 148.70)"/>
<rect x="488.80" y="148.90" width="10.2" height="5.6" rx="2.8" fill="none" stroke="#ffffff" stroke-width="1.8" transform="rotate(-47 493.90 151.70)"/>
<rect x="495.00" y="145.90" width="10.2" height="5.6" rx="2.8" fill="none" stroke="#ffffff" stroke-width="1.8" transform="rotate(-47 500.10 148.70)"/>
<path d="M 516.26 133.54 L 519.89 129.19 L 531.80 128.88 L 528.18 133.54 Z" fill="#8fcbf8"/>
<path d="M 516.26 133.54 L 528.18 133.54 L 528.18 144.53 L 516.26 144.53 Z" fill="#69b0e6"/>
<path d="M 528.18 133.54 L 531.80 128.88 L 531.80 140.28 L 528.18 144.53 Z" fill="#4d94d0"/>
<path d="M 516.78 145.15 L 528.18 145.15 L 528.18 155.82 L 516.78 155.82 Z" fill="#dddddd"/>
<path d="M 529.01 145.15 L 532.32 141.83 L 543.20 141.83 L 540.09 145.15 Z" fill="#f3f3f3"/>
<path d="M 529.01 145.15 L 540.09 145.15 L 540.09 155.82 L 529.01 155.82 Z" fill="#dddddd"/>
<path d="M 540.09 145.15 L 543.20 141.83 L 543.20 152.20 L 540.09 155.82 Z" fill="#bdbdbd"/>
<path d="M 539.89 125.05 L 539.89 141.01 M 531.80 133.03 L 548.07 133.03" stroke="#23a94b" stroke-width="4" fill="none"/>
<path d="M 558.95 142.87 L 572.94 142.87 L 572.94 154.79 L 558.95 154.79 Z" fill="#dddddd"/>
<path d="M 576.05 127.12 L 590.04 127.12 L 590.04 139.04 L 576.05 139.04 Z" fill="#8fcbf8"/>
<path d="M 574.29 127.12 L 574.29 154.79" stroke="#ef6d6d" stroke-width=".9" fill="none"/>
<path d="M 616.97 132.06 L 623.16 126.02 L 643.27 126.02 L 643.27 152.18 L 616.97 152.18 Z" fill="#7e848f"/>
<path d="M 616.97 132.06 L 623.16 126.02 L 643.27 126.02 L 637.22 132.06 Z" fill="#8b919c"/>
<path d="M 659.45 125.03 L 688.70 125.03 L 688.70 153.16 L 659.45 153.16 Z" fill="#7e848f"/>
<path d="M 659.45 125.03 L 688.70 125.03 L 688.70 130.38 L 659.45 130.38 Z" fill="#5e6470"/>
<path d="M 661.56 126.72 L 665.07 126.72 L 665.07 128.41 L 661.56 128.41 Z" fill="#7e848f"/>
<path d="M 662.96 135.16 L 666.90 135.16 L 666.90 138.96 L 662.96 138.96 Z" fill="#a0a6b1"/>
<path d="M 668.31 135.16 L 672.24 135.16 L 672.24 138.96 L 668.31 138.96 Z" fill="#a0a6b1"/>
<path d="M 673.65 135.16 L 677.59 135.16 L 677.59 138.96 L 673.65 138.96 Z" fill="#a0a6b1"/>
<path d="M 662.96 140.36 L 666.90 140.36 L 666.90 144.16 L 662.96 144.16 Z" fill="#a0a6b1"/>
<path d="M 668.31 140.36 L 672.24 140.36 L 672.24 144.16 L 668.31 144.16 Z" fill="#a0a6b1"/>
<path d="M 673.65 140.36 L 677.59 140.36 L 677.59 144.16 L 673.65 144.16 Z" fill="#a0a6b1"/>
<path d="M 662.96 145.57 L 666.90 145.57 L 666.90 149.36 L 662.96 149.36 Z" fill="#a0a6b1"/>
<path d="M 668.31 145.57 L 672.24 145.57 L 672.24 149.36 L 668.31 149.36 Z" fill="#a0a6b1"/>
<path d="M 673.65 145.57 L 677.59 145.57 L 677.59 149.36 L 673.65 149.36 Z" fill="#a0a6b1"/>
<path d="M 673.79 140.50 L 688.28 140.50 L 688.28 144.30 L 673.79 144.30 Z" fill="#a0a6b1"/>
<path d="M 632.72 144.44 L 648.48 144.44 L 648.48 157.38 L 632.72 157.38 Z" fill="#3b4453"/>
<path d="M 633.57 147.96 L 647.91 147.96 M 634.13 154.15 L 647.91 154.15" stroke="#666c78" stroke-width="1.5" fill="none"/>
<path d="M 636.94 145.00 L 639.33 145.00 L 639.33 151.19 L 636.94 151.19 Z" fill="#2f80c4"/>
<path d="M 643.13 151.47 L 645.24 151.47 L 645.24 156.82 L 643.13 156.82 Z" fill="#666c78"/>
<circle cx="640.18" cy="132.77" r="8" fill="#1f8ae2"/>
<path d="M639.98 127.17 l4.4 4.8 h-2.6 c0 3.4 -1 5.2 -3.4 6.4 c1 -2 0.8 -4 0.4 -6.4 h-3.2z" fill="#fff"/>
<path d="M 675.62 144.44 L 691.37 144.44 L 691.37 157.38 L 675.62 157.38 Z" fill="#3b4453"/>
<path d="M 676.46 147.96 L 690.81 147.96 M 677.03 154.15 L 690.81 154.15" stroke="#666c78" stroke-width="1.5" fill="none"/>
<path d="M 679.84 145.00 L 682.23 145.00 L 682.23 151.19 L 679.84 151.19 Z" fill="#2f80c4"/>
<path d="M 686.03 151.47 L 688.14 151.47 L 688.14 156.82 L 686.03 156.82 Z" fill="#666c78"/>
<circle cx="683.07" cy="132.77" r="8" fill="#1f8ae2"/>
<path d="M682.87 127.17 l4.4 4.8 h-2.6 c0 3.4 -1 5.2 -3.4 6.4 c1 -2 0.8 -4 0.4 -6.4 h-3.2z" fill="#fff"/>
<path d="M 743.13 134.60 L 752.27 125.03 L 760.71 125.03 L 751.57 134.60 Z" fill="#f3f3f3"/>
<path d="M 743.13 134.60 L 751.85 134.60 L 751.85 155.97 L 743.13 155.97 Z" fill="#e2e2e2"/>
<path d="M 752.27 134.17 L 761.13 125.03 L 761.13 146.13 L 752.27 155.69 Z" fill="#80d79d"/>
<path d="M 764.23 134.17 L 773.09 125.03 L 773.09 146.83 L 764.23 155.97 Z" fill="#f5b284"/>
<path d="M 822.79 141.98 L 851.21 141.98 L 851.21 147.84 L 822.79 147.84 Z" fill="#f6d06c"/>
<path d="M 824.92 141.98 L 824.92 144.64 M 827.05 141.98 L 827.05 143.75 M 829.18 141.98 L 829.18 144.64 M 831.31 141.98 L 831.31 143.75 M 833.45 141.98 L 833.45 144.64 M 835.58 141.98 L 835.58 143.75 M 837.71 141.98 L 837.71 144.64 M 839.84 141.98 L 839.84 143.75 M 841.97 141.98 L 841.97 144.64 M 844.10 141.98 L 844.10 143.75 M 846.23 141.98 L 846.23 144.64 M 848.37 141.98 L 848.37 143.75 M 850.50 141.98 L 850.50 144.64" stroke="#c9a03c" stroke-width=".8" fill="none"/>
<path d="M 823.32 132.21 L 823.32 140.74 M 850.50 132.21 L 850.50 140.74 M 824.92 136.29 L 849.08 136.29" stroke="#dcdcdc" stroke-width="1" fill="none"/>
<path d="M 823.85 136.29 L 827.76 134.34 L 827.76 138.25 Z" fill="#dcdcdc"/>
<path d="M 849.96 136.29 L 846.06 134.34 L 846.06 138.25 Z" fill="#dcdcdc"/>
<path d="M 882.47 129.01 L 892.95 129.01 L 892.95 139.67 L 882.47 139.67 Z" fill="#a9a9af"/>
<path d="M 882.47 141.09 L 892.95 141.09 L 892.95 151.75 L 882.47 151.75 Z" fill="#a9a9af"/>
<path d="M 869.50 129.55 L 880.16 129.55 L 880.16 151.75 L 869.50 151.75 Z M 869.50 140.56 L 880.16 140.56" fill="#48688c" stroke="#5bb8f5" stroke-width=".9"/>
<path d="M 872.52 126.35 L 866.84 126.35 L 866.84 131.32 M 866.84 149.08 L 866.84 154.41 L 872.52 154.41 M 880.69 125.99 L 880.69 154.77" fill="none" stroke="#5bb8f5" stroke-width="1"/>
<path d="M 924.56 134.87 L 931.67 128.30 L 948.19 128.30 L 942.33 134.87 Z" fill="#fbfbfb"/>
<path d="M 924.56 134.87 L 942.33 134.87 L 942.33 152.64 L 924.56 152.64 Z" fill="#e6e6ea"/>
<path d="M 942.33 134.87 L 948.19 128.30 L 948.19 146.42 L 942.33 152.64 Z" fill="#c8c8cd"/>
<path d="M 918.35 150.33 C 919.24 144.64 923.68 141.98 928.65 141.98 L 928.65 138.43 L 935.75 144.29 L 928.65 149.97 L 928.65 146.42 C 924.56 146.06 921.01 147.31 918.35 150.33 Z" fill="#3a3e46" stroke="#f4f4f4" stroke-width=".7"/>
<path d="M 962.22 125.99 L 991.17 125.99 L 991.17 154.94 L 962.22 154.94 Z" fill="#8cc5ef"/>
<path d="M 962.22 154.94 L 962.22 146.42 C 966.31 141.09 968.97 137.89 971.28 137.89 C 974.30 137.89 977.85 144.64 980.52 147.31 C 982.29 145.53 983.71 143.75 985.49 143.75 C 987.26 143.75 989.40 148.20 991.17 150.86 L 991.17 154.94 Z" fill="#4c90c5"/>
<circle cx="982.65" cy="133.99" r="3" fill="#fbe38c"/>
<path d="M 1008.05 136.65 L 1014.26 130.08 L 1030.25 130.08 L 1035.93 136.65 L 1035.93 149.97 L 1030.25 156.19 L 1014.26 156.19 L 1008.05 149.97 Z" fill="#e9d07c"/>
<path d="M 1030.25 130.08 L 1035.93 136.65 L 1035.93 149.97 L 1030.25 156.19 Z" fill="#d9bd62"/>
<path d="M 1008.05 136.65 L 1030.25 136.65 L 1035.93 136.65 M 1008.05 149.97 L 1030.25 142.87 L 1035.93 149.97 M 1014.26 130.08 L 1014.26 156.19 M 1030.25 130.08 L 1030.25 156.19 M 1008.05 136.65 L 1014.26 142.87 L 1030.25 136.65 M 1008.05 149.97 L 1014.26 142.87 L 1030.25 156.19 M 1014.26 156.19 L 1030.25 142.87 M 1014.26 130.08 L 1030.25 136.65 M 1008.05 142.87 L 1035.93 142.87" stroke="#c8a84a" stroke-width=".6" fill="none"/>
<path d="M 1003.96 129.01 L 1013.02 129.01 L 1013.02 125.10 L 1022.26 130.97 L 1013.02 137.18 L 1013.02 133.10 L 1003.96 133.10 Z" fill="#5bb8f5"/>
<rect x="1066.2" y="121.5" width="39.2" height="38.6" rx="3" fill="#3a5068" stroke="#426784" stroke-width="1.2"/>
<path d="M 1070.36 125.43 L 1098.34 125.43 L 1098.34 146.36 L 1070.36 146.36 Z" fill="none" stroke="#63e07b" stroke-width="1.1" stroke-dasharray="4.2 2.4"/>
<path d="M 1091.09 138.90 L 1091.09 154.65 L 1094.61 150.92 L 1097.10 156.73 L 1099.59 155.48 L 1097.10 150.30 L 1102.07 150.30 Z" fill="#f6f6f6" stroke="#3a5068" stroke-width=".5"/>
<path d="M 1163.01 130.82 L 1188.91 130.82 L 1188.91 156.52 L 1163.01 156.52 Z" fill="#8cc5ef"/>
<path d="M 1163.01 156.52 L 1163.01 144.70 C 1166.11 140.56 1168.19 138.49 1170.26 138.49 C 1173.37 138.49 1177.51 148.85 1180.62 151.96 C 1182.69 149.89 1183.73 148.23 1185.39 148.23 C 1186.84 148.23 1187.88 150.30 1188.91 151.96 L 1188.91 156.52 Z" fill="#4c90c5"/>
<circle cx="1180.62" cy="138.69" r="3.1" fill="#fbe9a0"/>
<linearGradient id="spk" x1="0" y1="0" x2="1" y2="1"><stop offset="0" stop-color="#ff9a2e"/><stop offset=".55" stop-color="#ff7a3c"/><stop offset="1" stop-color="#f0479a"/></linearGradient>
<path d="M1186.84 124.60 Q1188.53 130.58 1194.51 132.27 Q1188.53 133.96 1186.84 139.94 Q1185.15 133.96 1179.17 132.27 Q1185.15 130.58 1186.84 124.60Z" fill="url(#spk)" stroke="#3b4453" stroke-width=".7"/>
<path d="M1190.36 137.45 Q1191.37 141.01 1194.92 142.01 Q1191.37 143.01 1190.36 146.57 Q1189.36 143.01 1185.80 142.01 Q1189.36 141.01 1190.36 137.45Z" fill="url(#spk)" stroke="#3b4453" stroke-width=".7"/>
<path d="M 1210.26 132.68 L 1222.07 132.68 M 1207.56 135.38 L 1207.56 152.99 M 1210.26 155.69 L 1227.67 155.69 M 1230.36 144.70 L 1230.36 152.99" stroke="#e6e6e6" stroke-width="1.1" fill="none"/>
<path d="M 1214.82 138.07 L 1222.69 138.07 M 1212.33 140.56 L 1212.33 147.81 M 1214.82 150.30 C 1222.07 148.85 1225.18 144.70 1225.18 140.56" stroke="#e6e6e6" stroke-width="1.1" fill="none"/>
<rect x="1206.32" y="131.44" width="2.6" height="2.6" fill="#6cc0f5"/>
<rect x="1206.32" y="154.45" width="2.6" height="2.6" fill="#6cc0f5"/>
<rect x="1229.12" y="154.45" width="2.6" height="2.6" fill="#6cc0f5"/>
<rect x="1211.09" y="136.83" width="2.6" height="2.6" fill="#6cc0f5"/>
<rect x="1223.94" y="136.83" width="2.6" height="2.6" fill="#6cc0f5"/>
<rect x="1211.09" y="149.06" width="2.6" height="2.6" fill="#6cc0f5"/>
<path d="M1229.33 124.60 Q1231.01 130.58 1236.99 132.27 Q1231.01 133.96 1229.33 139.94 Q1227.64 133.96 1221.66 132.27 Q1227.64 130.58 1229.33 124.60Z" fill="url(#spk)" stroke="#3b4453" stroke-width=".7"/>
<path d="M1233.47 137.45 Q1234.47 141.01 1238.03 142.01 Q1234.47 143.01 1233.47 146.57 Q1232.47 143.01 1228.91 142.01 Q1232.47 141.01 1233.47 137.45Z" fill="url(#spk)" stroke="#3b4453" stroke-width=".7"/>
<rect x="60.4" y="188.3" width="299.2" height="23" fill="#3b4453" stroke="#4b586d" stroke-width="1"/>
<path d="M70.3 196.6 v6.2 l-3.6 -3.1z M74.6 196.6 v6.2 l-3.6 -3.1z" fill="#7c8697"/>
<text x="88.5" y="204.1" font-size="12.2" font-weight="normal" fill="#e8e8e8" text-anchor="start" textLength="56.0" lengthAdjust="spacingAndGlyphs" class="n" stroke="#e8e8e8">BROWSER</text>
<rect x="339" y="198.8" width="7.6" height="1.4" fill="#b8bcc6"/>
<rect x="96.3" y="217" width="24.8" height="20" fill="#3b4453"/>
<rect x="121.1" y="217" width="170" height="20" fill="#222834"/>
<rect x="291.1" y="217" width="24.6" height="20" fill="#3b4453"/>
<path d="M77.4 225.0 l4.4 4.4 4.4 -4.4" fill="none" stroke="#e8e8e8" stroke-width="1.4"/>
<path d="M98.8 227.0 C102.6 220.1 111.4 220.1 115.2 227.0 C111.4 233.9 102.6 233.9 98.8 227.0Z" fill="#dedede"/><circle cx="107.0" cy="227.0" r="3.3" fill="#414a5a"/><circle cx="107.0" cy="227.0" r="2.25" fill="#c6c6c6"/>
<path d="M125.2 224 l3.4 -3.6 h10 l-3.4 3.6z" fill="#f2f2f2"/><rect x="125.2" y="224" width="10" height="9.8" fill="#dcdcdc"/><path d="M135.2 224 l3.4 -3.6 v9.8 l-3.4 3.6z" fill="#b8b8b8"/>
<text x="153.9" y="231.3" font-size="12" font-weight="bold" fill="#ffffff" text-anchor="start" textLength="127.4" lengthAdjust="spacingAndGlyphs">spiral_lampshade_v3a</text>
<circle cx="302" cy="227" r="4.4" fill="none" stroke="#ffffff" stroke-width="2.6"/>
<rect x="114.1" y="241" width="153.9" height="20" fill="#3b4453"/>
<path d="M97.7 246.6 l4.4 4.4 -4.4 4.4" fill="none" stroke="#e0e0e0" stroke-width="1.3"/>
<path d="M132.70 249.78 L132.70 252.22 L130.61 252.35 L129.92 254.02 L131.31 255.58 L129.58 257.31 L128.02 255.92 L126.35 256.61 L126.22 258.70 L123.78 258.70 L123.65 256.61 L121.98 255.92 L120.42 257.31 L118.69 255.58 L120.08 254.02 L119.39 252.35 L117.30 252.22 L117.30 249.78 L119.39 249.65 L120.08 247.98 L118.69 246.42 L120.42 244.69 L121.98 246.08 L123.65 245.39 L123.78 243.30 L126.22 243.30 L126.35 245.39 L128.02 246.08 L129.58 244.69 L131.31 246.42 L129.92 247.98 L130.61 249.65Z" fill="#a2a7b5"/><circle cx="125" cy="251" r="2.81" fill="#3b4453"/>
<text x="147.5" y="255.2" font-size="12" font-weight="normal" fill="#f0f0f0" text-anchor="start" textLength="107.1" lengthAdjust="spacingAndGlyphs" class="n" stroke="#f0f0f0">Document Settings</text>
<rect x="114.1" y="265" width="121.9" height="20" fill="#3b4453"/>
<path d="M97.7 270.6 l4.4 4.4 -4.4 4.4" fill="none" stroke="#e0e0e0" stroke-width="1.3"/>
<path d="M117.0 268.1 h5.2 l1.6 1.3 v1.6 h-6.8z" fill="#c4c4c4"/><path d="M117.0 272.4 h6.8 l2 -2.3 h7.4 v12.1 h-16.2z" fill="#dadada"/>
<text x="147.5" y="279.2" font-size="12" font-weight="normal" fill="#f0f0f0" text-anchor="start" textLength="75.3" lengthAdjust="spacingAndGlyphs" class="n" stroke="#f0f0f0">Named Views</text>
<rect x="114.1" y="289" width="125.7" height="20" fill="#3b4453"/>
<path d="M97.7 294.6 l4.4 4.4 -4.4 4.4" fill="none" stroke="#e0e0e0" stroke-width="1.3"/>
<path d="M117.0 292.1 h5.2 l1.6 1.3 v1.6 h-6.8z" fill="#c4c4c4"/><path d="M117.0 296.4 h6.8 l2 -2.3 h7.4 v12.1 h-16.2z" fill="#dadada"/>
<text x="147.5" y="303.2" font-size="12" font-weight="normal" fill="#f0f0f0" text-anchor="start" textLength="79.3" lengthAdjust="spacingAndGlyphs" class="n" stroke="#f0f0f0">Selection Sets</text>
<rect x="114.1" y="313" width="102.9" height="20" fill="#3b4453"/>
<path d="M97.7 318.6 l4.4 4.4 -4.4 4.4" fill="none" stroke="#e0e0e0" stroke-width="1.3"/>
<path d="M117.3 323.0 C120.8 316.8 129.2 316.8 132.7 323.0 C129.2 329.2 120.8 329.2 117.3 323.0Z" fill="none" stroke="#bcc0c8" stroke-width="1.15"/><circle cx="124.6" cy="323.2" r="2.9" fill="none" stroke="#bcc0c8" stroke-width="1.1"/><path d="M118.9 317.1 L130.9 328.9" stroke="#bcc0c8" stroke-width="1.2"/>
<path d="M141.9 316.1 h5.2 l1.6 1.3 v1.6 h-6.8z" fill="#c4c4c4"/><path d="M141.9 320.4 h6.8 l2 -2.3 h7.4 v12.1 h-16.2z" fill="#dadada"/>
<text x="172.3" y="327.2" font-size="12" font-weight="normal" fill="#f0f0f0" text-anchor="start" textLength="33.5" lengthAdjust="spacingAndGlyphs" class="n" stroke="#f0f0f0">Origin</text>
<rect x="114.1" y="337" width="114.9" height="20" fill="#3b4453"/>
<path d="M97.7 342.6 l4.4 4.4 -4.4 4.4" fill="none" stroke="#e0e0e0" stroke-width="1.3"/>
<path d="M117.3 347.0 C120.8 340.8 129.2 340.8 132.7 347.0 C129.2 353.2 120.8 353.2 117.3 347.0Z" fill="none" stroke="#bcc0c8" stroke-width="1.15"/><circle cx="124.6" cy="347.2" r="2.9" fill="none" stroke="#bcc0c8" stroke-width="1.1"/><path d="M118.9 341.1 L130.9 352.9" stroke="#bcc0c8" stroke-width="1.2"/>
<path d="M141.9 340.1 h5.2 l1.6 1.3 v1.6 h-6.8z" fill="#c4c4c4"/><path d="M141.9 344.4 h6.8 l2 -2.3 h7.4 v12.1 h-16.2z" fill="#dadada"/>
<text x="172.3" y="351.2" font-size="12" font-weight="normal" fill="#f0f0f0" text-anchor="start" textLength="45.9" lengthAdjust="spacingAndGlyphs" class="n" stroke="#f0f0f0">Analysis</text>
<rect x="114.1" y="361" width="106.9" height="20" fill="#3b4453"/>
<path d="M97.7 366.6 l4.4 4.4 -4.4 4.4" fill="none" stroke="#e0e0e0" stroke-width="1.3"/>
<path d="M116.8 371.0 C120.6 364.1 129.4 364.1 133.2 371.0 C129.4 377.9 120.6 377.9 116.8 371.0Z" fill="#dedede"/><circle cx="125.0" cy="371.0" r="3.3" fill="#414a5a"/><circle cx="125.0" cy="371.0" r="2.25" fill="#c6c6c6"/>
<path d="M141.9 364.1 h5.2 l1.6 1.3 v1.6 h-6.8z" fill="#c4c4c4"/><path d="M141.9 368.4 h6.8 l2 -2.3 h7.4 v12.1 h-16.2z" fill="#dadada"/>
<text x="172.3" y="375.2" font-size="12" font-weight="normal" fill="#f0f0f0" text-anchor="start" textLength="37.5" lengthAdjust="spacingAndGlyphs" class="n" stroke="#f0f0f0">Bodies</text>
<rect x="114.1" y="385" width="118.9" height="20" fill="#3b4453"/>
<path d="M95.4 393.0 l4.4 4.4 4.4 -4.4" fill="none" stroke="#e8e8e8" stroke-width="1.4"/>
<path d="M116.8 395.0 C120.6 388.1 129.4 388.1 133.2 395.0 C129.4 401.9 120.6 401.9 116.8 395.0Z" fill="#dedede"/><circle cx="125.0" cy="395.0" r="3.3" fill="#414a5a"/><circle cx="125.0" cy="395.0" r="2.25" fill="#c6c6c6"/>
<path d="M141.9 388.1 h5.2 l1.6 1.3 v1.6 h-6.8z" fill="#c4c4c4"/><path d="M141.9 392.4 h6.8 l2 -2.3 h7.4 v12.1 h-16.2z" fill="#dadada"/>
<text x="172.3" y="399.2" font-size="12" font-weight="normal" fill="#f0f0f0" text-anchor="start" textLength="49.7" lengthAdjust="spacingAndGlyphs" class="n" stroke="#f0f0f0">Sketches</text>
<rect x="114.1" y="481" width="142.7" height="20" fill="#3b4453"/>
<path d="M97.7 486.6 l4.4 4.4 -4.4 4.4" fill="none" stroke="#e0e0e0" stroke-width="1.3"/>
<path d="M117.3 491.0 C120.8 484.8 129.2 484.8 132.7 491.0 C129.2 497.2 120.8 497.2 117.3 491.0Z" fill="none" stroke="#bcc0c8" stroke-width="1.15"/><circle cx="124.6" cy="491.2" r="2.9" fill="none" stroke="#bcc0c8" stroke-width="1.1"/><path d="M118.9 485.1 L130.9 496.9" stroke="#bcc0c8" stroke-width="1.2"/>
<path d="M141.9 484.1 h5.2 l1.6 1.3 v1.6 h-6.8z" fill="#c4c4c4"/><path d="M141.9 488.4 h6.8 l2 -2.3 h7.4 v12.1 h-16.2z" fill="#dadada"/>
<text x="172.3" y="495.2" font-size="12" font-weight="normal" fill="#f0f0f0" text-anchor="start" textLength="71.5" lengthAdjust="spacingAndGlyphs" class="n" stroke="#f0f0f0">Construction</text>
<rect x="132.4" y="409" width="114.2" height="20" fill="#3b4453"/>
<path d="M134.8 419.0 C138.6 412.1 147.4 412.1 151.2 419.0 C147.4 425.9 138.6 425.9 134.8 419.0Z" fill="#dedede"/><circle cx="143.0" cy="419.0" r="3.3" fill="#414a5a"/><circle cx="143.0" cy="419.0" r="2.25" fill="#c6c6c6"/>
<path d="M163.7 412.0 h8.2 M161.1 414.6 v8.2 M163.7 425.3 h4.6 M174.4 414.6 v4.4" stroke="#e8e8e8" stroke-width="1" fill="none"/><rect x="160.0" y="410.9" width="2.2" height="2.2" fill="#f0f0f0"/><rect x="173.3" y="410.9" width="2.2" height="2.2" fill="#f0f0f0"/><rect x="160.0" y="424.2" width="2.2" height="2.2" fill="#f0f0f0"/><rect x="168.8" y="421.1" width="7.2" height="5.6" rx=".6" fill="#ea6c6c"/><path d="M170.3 421.3 v-1.8 a2.1 2.1 0 0 1 4.2 0 v1.8" fill="none" stroke="#ea6c6c" stroke-width="1.1"/><path d="M170.8 423.9 h3.2 M172.4 422.7 v2.6" stroke="#8c3030" stroke-width=".7"/>
<text x="190.2" y="423.2" font-size="12" font-weight="normal" fill="#f0f0f0" text-anchor="start" textLength="42.6" lengthAdjust="spacingAndGlyphs" class="n" stroke="#f0f0f0">Sketch1</text>
<rect x="132.4" y="433" width="114.2" height="20" fill="#3b4453"/>
<path d="M134.8 443.0 C138.6 436.1 147.4 436.1 151.2 443.0 C147.4 449.9 138.6 449.9 134.8 443.0Z" fill="#dedede"/><circle cx="143.0" cy="443.0" r="3.3" fill="#414a5a"/><circle cx="143.0" cy="443.0" r="2.25" fill="#c6c6c6"/>
<path d="M163.7 436.0 h8.2 M161.1 438.6 v8.2 M163.7 449.3 h4.6 M174.4 438.6 v4.4" stroke="#e8e8e8" stroke-width="1" fill="none"/><rect x="160.0" y="434.9" width="2.2" height="2.2" fill="#f0f0f0"/><rect x="173.3" y="434.9" width="2.2" height="2.2" fill="#f0f0f0"/><rect x="160.0" y="448.2" width="2.2" height="2.2" fill="#f0f0f0"/><rect x="168.8" y="445.1" width="7.2" height="5.6" rx=".6" fill="#ea6c6c"/><path d="M170.3 445.3 v-1.8 a2.1 2.1 0 0 1 4.2 0 v1.8" fill="none" stroke="#ea6c6c" stroke-width="1.1"/><path d="M170.8 447.9 h3.2 M172.4 446.7 v2.6" stroke="#8c3030" stroke-width=".7"/>
<text x="190.2" y="447.2" font-size="12" font-weight="normal" fill="#f0f0f0" text-anchor="start" textLength="43.8" lengthAdjust="spacingAndGlyphs" class="n" stroke="#f0f0f0">Sketch2</text>
<rect x="132.4" y="457" width="118.2" height="20" fill="#3b4453"/>
<path d="M134.8 467.0 C138.6 460.1 147.4 460.1 151.2 467.0 C147.4 473.9 138.6 473.9 134.8 467.0Z" fill="#dedede"/><circle cx="143.0" cy="467.0" r="3.3" fill="#414a5a"/><circle cx="143.0" cy="467.0" r="2.25" fill="#c6c6c6"/>
<path d="M163.7 460.0 h8.2 M161.1 462.6 v8.2 M163.7 473.3 h4.6 M174.4 462.6 v4.4" stroke="#e8e8e8" stroke-width="1" fill="none"/><rect x="160.0" y="458.9" width="2.2" height="2.2" fill="#5bb8f5"/><rect x="173.3" y="458.9" width="2.2" height="2.2" fill="#5bb8f5"/><rect x="160.0" y="472.2" width="2.2" height="2.2" fill="#5bb8f5"/><g transform="rotate(-40 173.4 470.9)"><rect x="169.2" y="469.4" width="6" height="3" fill="#f5c84a"/><rect x="175.2" y="469.4" width="2.2" height="3" rx=".8" fill="#e8504a"/><path d="M169.2 469.4 l-2.6 1.5 2.6 1.5z" fill="#e8dcc0"/></g>
<text x="190.2" y="471.2" font-size="12" font-weight="normal" fill="#f0f0f0" text-anchor="start" textLength="49.6" lengthAdjust="spacingAndGlyphs" class="n" stroke="#f0f0f0">Sketch14</text>
<rect x="60.4" y="1009.6" width="299.4" height="23" fill="#3b4453" stroke="#4b586d" stroke-width="1"/>
<text x="88.0" y="1025.7" font-size="12.2" font-weight="normal" fill="#e8e8e8" text-anchor="start" textLength="65.4" lengthAdjust="spacingAndGlyphs" class="n" stroke="#e8e8e8">COMMENTS</text>
<path d="M339.2 1021.2 h7.4 M342.9 1017.5 v7.4" stroke="#c8ccd4" stroke-width="1.4" fill="none"/>
<rect x="556.2" y="1008.1" width="238.6" height="23.7" fill="#3b4453"/>
<ellipse cx="566.9" cy="1019.3" rx="7.4" ry="3.3" fill="none" stroke="#f0f0f0" stroke-width="1.2"/><rect x="565.9" y="1011.2" width="2" height="16.6" fill="#4aa0e2"/><path d="M559.6 1019.6 a7.4 3.3 0 0 0 12 2.4" fill="none" stroke="#f0f0f0" stroke-width="1.2"/>
<path d="M581.6 1018.2 h5.4 l-2.7 3.3z" fill="#9aa0ac"/>
<path d="M596 1016 l2.6 -3.8 3 2 2.4 -2 3.4 3.8z" fill="#d0d0d0"/><rect x="594.4" y="1016.2" width="14.4" height="10.4" fill="#f2f2f2"/><rect x="596.6" y="1019" width="10" height="5.4" fill="#5bb8f5"/>
<path d="M622.4 1027.4 c-1.4 -2.4 -3 -4.4 -3.6 -6.6 c0.8 -0.8 2.2 -0.2 3.2 1.6 l0.2 -8.4 c0 -1.2 1.8 -1.2 1.9 0 l0.5 5.4 l0.3 -7.2 c0 -1.3 1.9 -1.3 2 0 l0.2 7 l0.9 -6.2 c0.2 -1.2 1.9 -1 1.9 0.2 l-0.5 6.6 l1.6 -4.6 c0.4 -1.1 2 -0.6 1.7 0.6 l-1.7 7.4 c-0.4 2 -0.9 3 -1.9 4.4z" fill="#dcdcdc"/>
<circle cx="650" cy="1019.2" r="4.5" fill="#5a6272" stroke="#e6e6e6" stroke-width="1.2"/><path d="M653.4 1022.8 l4.2 4.4" stroke="#dca055" stroke-width="1.8"/><path d="M657 1013.4 h4.6 M659.3 1011.2 v4.4 M657 1017.6 h4.6" stroke="#e6e6e6" stroke-width="1" fill="none"/>
<rect x="671.4" y="1011.2" width="16.2" height="16.2" fill="none" stroke="#f0f0f0" stroke-width="1" stroke-dasharray="2.2 1.2"/><circle cx="678.2" cy="1018.2" r="6.2" fill="#666d7c" stroke="#e6e6e6" stroke-width="1.2"/><path d="M683 1023 l4 4.2" stroke="#c98a3c" stroke-width="1.8"/>
<path d="M693.2 1018.2 h5.4 l-2.7 3.3z" fill="#9aa0ac"/>
<rect x="705.6" y="1013" width="15.4" height="11.2" rx="1" fill="#b4b4b4" stroke="#f0f0f0" stroke-width="1.3"/><path d="M713.3 1024.6 v2 M709 1027 h8.6" stroke="#f0f0f0" stroke-width="1.2"/>
<path d="M724.3 1018.2 h5.4 l-2.7 3.3z" fill="#9aa0ac"/>
<rect x="736.6" y="1011.4" width="13" height="13" fill="#4a5262" stroke="#f0f0f0" stroke-width="1"/><path d="M740.9 1011.4 v13 M745.3 1011.4 v13 M736.6 1015.7 h13 M736.6 1020.1 h13" stroke="#f0f0f0" stroke-width="1"/>
<path d="M755.2 1018.2 h5.4 l-2.7 3.3z" fill="#9aa0ac"/>
<rect x="767.0" y="1012.2" width="7.4" height="6.4" fill="#cfcfcf"/><rect x="768.8" y="1014.0" width="3.8" height="2.8" fill="#e8e8e8"/>
<rect x="767.0" y="1019.6" width="7.4" height="6.4" fill="#cfcfcf"/><rect x="768.8" y="1021.4" width="3.8" height="2.8" fill="#e8e8e8"/>
<rect x="775.4" y="1012.2" width="7.4" height="6.4" fill="#cfcfcf"/><rect x="777.2" y="1014.0" width="3.8" height="2.8" fill="#e8e8e8"/>
<rect x="775.4" y="1019.6" width="7.4" height="6.4" fill="#cfcfcf"/><rect x="777.2" y="1021.4" width="3.8" height="2.8" fill="#e8e8e8"/>
<path d="M786.5 1018.2 h5.4 l-2.7 3.3z" fill="#9aa0ac"/>
<rect x="60.8" y="1041.3" width="259.6" height="6.3" rx="3.1" fill="#566277"/>
<rect x="67.8" y="1063" width="1.9" height="12" fill="#a2a7b5"/><path d="M79 1063 v12 l-8.4 -6z" fill="#a2a7b5"/>
<path d="M102 1063.2 v11.6 l-9.6 -5.8z" fill="#a2a7b5"/><rect x="103.4" y="1066.4" width="1.9" height="5" fill="#a2a7b5"/>
<path d="M117.8 1061.4 v15.2 l12.4 -7.6z" fill="#a2a7b5"/>
<rect x="142" y="1066.4" width="1.9" height="5" fill="#a2a7b5"/><path d="M145.4 1063.2 v11.6 l9.6 -5.8z" fill="#a2a7b5"/>
<path d="M168 1063 v12 l8.4 -6z" fill="#a2a7b5"/><rect x="177.4" y="1063" width="1.9" height="12" fill="#a2a7b5"/>
<rect x="209.2" y="1080.3" width="1038.6" height="1.8" fill="#56647a"/>
<path d="M210.0 1075 v6M234.0 1075 v6M258.0 1075 v6M282.0 1075 v6M306.0 1075 v6M329.9 1075 v6M353.9 1075 v6M377.9 1075 v6M401.9 1075 v6M425.9 1075 v6M449.9 1075 v6M473.9 1075 v6M497.9 1075 v6M521.9 1075 v6M545.9 1075 v6M569.8 1075 v6M593.8 1075 v6M617.8 1075 v6M641.8 1075 v6M665.8 1075 v6M689.8 1075 v6M713.8 1075 v6M737.8 1075 v6M761.8 1075 v6M785.8 1075 v6M809.8 1075 v6M833.7 1075 v6M857.7 1075 v6M881.7 1075 v6M905.7 1075 v6M929.7 1075 v6M953.7 1075 v6M977.7 1075 v6M1001.7 1075 v6M1025.7 1075 v6M1049.7 1075 v6M1073.6 1075 v6M1097.6 1075 v6M1121.6 1075 v6M1145.6 1075 v6M1169.6 1075 v6M1193.6 1075 v6M1217.6 1075 v6M1241.6 1075 v6" stroke="#56647a" stroke-width="1.5" fill="none"/>
<g transform="translate(210.0 1063.8)"><path d="M-8.3 -1.6 L-2.4 -7.6 H1.9 L-4.5 -1.6Z" fill="#f6f6f6"/><rect x="-8.3" y="-1.6" width="3.4" height="9.4" fill="#e2e2e2"/><path d="M-4.6 -1.5 L1.9 -7.6 V2 L-4.6 7.7Z" fill="#80d79d"/><path d="M2.9 -2.2 L7.9 -7.6 V2.2 L2.9 7.7Z" fill="#f5b284"/></g>
<g transform="translate(234.0 1063.8)"><path d="M-8.3 -1.6 L-2.4 -7.6 H1.9 L-4.5 -1.6Z" fill="#f6f6f6"/><rect x="-8.3" y="-1.6" width="3.4" height="9.4" fill="#e2e2e2"/><path d="M-4.6 -1.5 L1.9 -7.6 V2 L-4.6 7.7Z" fill="#80d79d"/><path d="M2.9 -2.2 L7.9 -7.6 V2.2 L2.9 7.7Z" fill="#f5b284"/></g>
<g transform="translate(258.0 1063.8)"><path d="M-8.3 -1.6 L-2.4 -7.6 H1.9 L-4.5 -1.6Z" fill="#f6f6f6"/><rect x="-8.3" y="-1.6" width="3.4" height="9.4" fill="#e2e2e2"/><path d="M-4.6 -1.5 L1.9 -7.6 V2 L-4.6 7.7Z" fill="#80d79d"/><path d="M2.9 -2.2 L7.9 -7.6 V2.2 L2.9 7.7Z" fill="#f5b284"/></g>
<g transform="translate(282.0 1063.8)"><path d="M-4.4 -7.2 h8.0 M-6.8 -4.800000000000001 v8.0 M-4.4 5.6000000000000005 h4.4 M6.000000000000001 -4.800000000000001 v4.2" stroke="#e8e8e8" stroke-width="1" fill="none"/><rect x="-8.0" y="-8.4" width="2.4" height="2.4" fill="#5bb8f5"/><rect x="4.8" y="-8.4" width="2.4" height="2.4" fill="#5bb8f5"/><rect x="-8.0" y="4.4" width="2.4" height="2.4" fill="#5bb8f5"/><g transform="rotate(-42 4.6 3.8)"><rect x="0.8" y="2.5" width="5.6" height="2.8" fill="#f5c84a"/><rect x="6.4" y="2.5" width="2" height="2.8" rx=".8" fill="#e8504a"/><path d="M0.8 2.5 l-2.4 1.4 2.4 1.4z" fill="#e8dcc0"/></g></g>
<g transform="translate(306.0 1063.8)"><path d="M-4.4 -7.2 h8.0 M-6.8 -4.800000000000001 v8.0 M-4.4 5.6000000000000005 h4.4 M6.000000000000001 -4.800000000000001 v4.2" stroke="#e8e8e8" stroke-width="1" fill="none"/><rect x="-8.0" y="-8.4" width="2.4" height="2.4" fill="#5bb8f5"/><rect x="4.8" y="-8.4" width="2.4" height="2.4" fill="#5bb8f5"/><rect x="-8.0" y="4.4" width="2.4" height="2.4" fill="#5bb8f5"/><g transform="rotate(-42 4.6 3.8)"><rect x="0.8" y="2.5" width="5.6" height="2.8" fill="#f5c84a"/><rect x="6.4" y="2.5" width="2" height="2.8" rx=".8" fill="#e8504a"/><path d="M0.8 2.5 l-2.4 1.4 2.4 1.4z" fill="#e8dcc0"/></g></g>
<g transform="translate(329.9 1063.8)"><path d="M-8.1 -7.8 h16.2 l-1.9 12 h-12.4z" fill="#f5a870"/><path d="M-8.1 -7.8 l5 5.4 h6.2 l5 -5.4z" fill="#000" opacity=".07"/><circle cx="0" cy="3.6" r="4.3" fill="#d4d4d4" stroke="#4a4f5a" stroke-width=".8"/></g>
<g transform="translate(353.9 1063.8)"><path d="M-7.6 -0.6 l7 -5.4 8.2 3.2 -7 5.6z" fill="#dcdcdc"/><path d="M-7.6 -0.6 l8.2 3.4 v4.6 l-8.2 -3.6z" fill="#8fcbf8"/><path d="M0.6 2.8 l7 -5.6 v4.4 l-7 5.8z" fill="#4a9be0"/></g>
<g transform="translate(377.9 1063.8)"><path d="M-4.4 -7.2 h8.0 M-6.8 -4.800000000000001 v8.0 M-4.4 5.6000000000000005 h4.4 M6.000000000000001 -4.800000000000001 v4.2" stroke="#e8e8e8" stroke-width="1" fill="none"/><rect x="-8.0" y="-8.4" width="2.4" height="2.4" fill="#5bb8f5"/><rect x="4.8" y="-8.4" width="2.4" height="2.4" fill="#5bb8f5"/><rect x="-8.0" y="4.4" width="2.4" height="2.4" fill="#5bb8f5"/><g transform="rotate(-42 4.6 3.8)"><rect x="0.8" y="2.5" width="5.6" height="2.8" fill="#f5c84a"/><rect x="6.4" y="2.5" width="2" height="2.8" rx=".8" fill="#e8504a"/><path d="M0.8 2.5 l-2.4 1.4 2.4 1.4z" fill="#e8dcc0"/></g></g>
<g transform="translate(401.9 1063.8)"><path d="M-8 -2 C-3 -7 4 -7 8 -2 L5 1 C2 -2 -2 -2 -5 1 Z" fill="#b5defc"/><path d="M-5 1 C-2 -2 2 -2 5 1 L5 6.6 C2 4 -2 4 -5 6.6 Z" fill="#8fcbf8"/><path d="M-8 -2 L-5 1 V6.6 L-8 3.4Z" fill="#6aaee3"/><path d="M5 1 L8 -2 V3.4 L5 6.6Z" fill="#dcdcdc"/><path d="M6.6 -5 C3 -8.4 -3 -8.4 -6.4 -5.6" stroke="#f0f0f0" stroke-width=".9" fill="none"/><path d="M-7.8 -4.4 l1.4 -2.6 1.4 2.2z" fill="#f0f0f0"/></g>
<g transform="translate(425.9 1063.8)" opacity=".42"><path d="M-6.4 -4.6 l2 -2.8 h11 l-2 2.8z" fill="#8fb5dc"/><rect x="-6.4" y="-4.6" width="11" height="5" fill="#5b8cc0"/><path d="M4.6 -4.6 l2 -2.8 v5 l-2 2.8z" fill="#3f6fa6"/><rect x="-6.4" y="1.4" width="11" height="5.8" fill="#9a9ea8"/><path d="M4.6 1.4 l2 -2.6 v5.6 l-2 2.8z" fill="#7c808a"/></g>
<g transform="translate(449.9 1063.8)" opacity=".42"><circle cx="3.6" cy="0" r="4" fill="#7aa2d0"/><path d="M0 0 h-5" stroke="#b0b4be" stroke-width="1.8"/><path d="M-8 0 l4 -3.2 v6.4z" fill="#b0b4be"/></g>
<g transform="translate(473.9 1063.8)" opacity=".42"><circle cx="3.6" cy="0" r="4" fill="#7aa2d0"/><path d="M0 0 h-5" stroke="#b0b4be" stroke-width="1.8"/><path d="M-8 0 l4 -3.2 v6.4z" fill="#b0b4be"/></g>
<g transform="translate(497.9 1063.8)" opacity=".42"><path d="M-7 7.4 L0 -7.4 V7.4Z" fill="#8aa8cc"/><path d="M0 -7.4 L7 7.4 H0Z" fill="#5f82b0"/></g>
<g transform="translate(521.9 1063.8)" opacity=".42"><circle cx="4.68" cy="2.70" r="1.8" fill="#7aa2d0"/><circle cx="0.00" cy="5.40" r="1.8" fill="#7aa2d0"/><circle cx="-4.68" cy="2.70" r="1.8" fill="#7aa2d0"/><circle cx="-4.68" cy="-2.70" r="1.8" fill="#7aa2d0"/><circle cx="-0.00" cy="-5.40" r="1.8" fill="#7aa2d0"/><circle cx="4.68" cy="-2.70" r="1.8" fill="#7aa2d0"/></g>
<g transform="translate(545.9 1063.8)" opacity=".42"><path d="M-4.4 -7.2 h8.0 M-6.8 -4.800000000000001 v8.0 M-4.4 5.6000000000000005 h4.4 M6.000000000000001 -4.800000000000001 v4.2" stroke="#e8e8e8" stroke-width="1" fill="none"/><rect x="-8.0" y="-8.4" width="2.4" height="2.4" fill="#5bb8f5"/><rect x="4.8" y="-8.4" width="2.4" height="2.4" fill="#5bb8f5"/><rect x="-8.0" y="4.4" width="2.4" height="2.4" fill="#5bb8f5"/><g transform="rotate(-42 4.6 3.8)"><rect x="0.8" y="2.5" width="5.6" height="2.8" fill="#f5c84a"/><rect x="6.4" y="2.5" width="2" height="2.8" rx=".8" fill="#e8504a"/><path d="M0.8 2.5 l-2.4 1.4 2.4 1.4z" fill="#e8dcc0"/></g></g>
<g transform="translate(569.8 1063.8)" opacity=".42"><path d="M-8.3 -1.6 L-2.4 -7.6 H1.9 L-4.5 -1.6Z" fill="#f6f6f6"/><rect x="-8.3" y="-1.6" width="3.4" height="9.4" fill="#e2e2e2"/><path d="M-4.6 -1.5 L1.9 -7.6 V2 L-4.6 7.7Z" fill="#80d79d"/><path d="M2.9 -2.2 L7.9 -7.6 V2.2 L2.9 7.7Z" fill="#f5b284"/></g>
<g transform="translate(593.8 1063.8)" opacity=".42"><path d="M-2 -7 h8.6 v8 h-8.6z" fill="#5b8cc0"/><path d="M-2 -7 l1.6 -1.4 h8.6 l-1.6 1.4z" fill="#8fb5dc"/><path d="M-7.6 -1 h8.6 v8 h-8.6z" fill="#6a9bd0"/><path d="M-7.6 -1 l1.6 -1.6 h8.6 l-1.6 1.6z" fill="#9cc0e6"/><path d="M1 -1 l1.6 -1.6 v8 l-1.6 1.6z" fill="#46709e"/></g>
<g transform="translate(617.8 1063.8)" opacity=".42"><path d="M-8.3 -1.6 L-2.4 -7.6 H1.9 L-4.5 -1.6Z" fill="#f6f6f6"/><rect x="-8.3" y="-1.6" width="3.4" height="9.4" fill="#e2e2e2"/><path d="M-4.6 -1.5 L1.9 -7.6 V2 L-4.6 7.7Z" fill="#80d79d"/><path d="M2.9 -2.2 L7.9 -7.6 V2.2 L2.9 7.7Z" fill="#f5b284"/></g>
<g transform="translate(641.8 1063.8)" opacity=".42"><path d="M-4.4 -7.2 h8.0 M-6.8 -4.800000000000001 v8.0 M-4.4 5.6000000000000005 h4.4 M6.000000000000001 -4.800000000000001 v4.2" stroke="#e8e8e8" stroke-width="1" fill="none"/><rect x="-8.0" y="-8.4" width="2.4" height="2.4" fill="#5bb8f5"/><rect x="4.8" y="-8.4" width="2.4" height="2.4" fill="#5bb8f5"/><rect x="-8.0" y="4.4" width="2.4" height="2.4" fill="#5bb8f5"/><g transform="rotate(-42 4.6 3.8)"><rect x="0.8" y="2.5" width="5.6" height="2.8" fill="#f5c84a"/><rect x="6.4" y="2.5" width="2" height="2.8" rx=".8" fill="#e8504a"/><path d="M0.8 2.5 l-2.4 1.4 2.4 1.4z" fill="#e8dcc0"/></g></g>
<g transform="translate(665.8 1063.8)" opacity=".42"><path d="M-8.1 -7.8 h16.2 l-1.9 12 h-12.4z" fill="#6a9bd8"/><path d="M-8.1 -7.8 l5 5.4 h6.2 l5 -5.4z" fill="#000" opacity=".07"/><circle cx="0" cy="3.6" r="4.3" fill="#d4d4d4" stroke="#4a4f5a" stroke-width=".8"/></g>
<g transform="translate(689.8 1063.8)" opacity=".42"><path d="M-8.1 -7.8 h16.2 l-1.9 12 h-12.4z" fill="#6a9bd8"/><path d="M-8.1 -7.8 l5 5.4 h6.2 l5 -5.4z" fill="#000" opacity=".07"/><circle cx="0" cy="3.6" r="4.3" fill="#d4d4d4" stroke="#4a4f5a" stroke-width=".8"/></g>
<g transform="translate(713.8 1063.8)" opacity=".42"><path d="M-4.4 -7.2 h8.0 M-6.8 -4.800000000000001 v8.0 M-4.4 5.6000000000000005 h4.4 M6.000000000000001 -4.800000000000001 v4.2" stroke="#e8e8e8" stroke-width="1" fill="none"/><rect x="-8.0" y="-8.4" width="2.4" height="2.4" fill="#5bb8f5"/><rect x="4.8" y="-8.4" width="2.4" height="2.4" fill="#5bb8f5"/><rect x="-8.0" y="4.4" width="2.4" height="2.4" fill="#5bb8f5"/><g transform="rotate(-42 4.6 3.8)"><rect x="0.8" y="2.5" width="5.6" height="2.8" fill="#f5c84a"/><rect x="6.4" y="2.5" width="2" height="2.8" rx=".8" fill="#e8504a"/><path d="M0.8 2.5 l-2.4 1.4 2.4 1.4z" fill="#e8dcc0"/></g></g>
<g transform="translate(737.8 1063.8)" opacity=".42"><path d="M-8.3 -1.6 L-2.4 -7.6 H1.9 L-4.5 -1.6Z" fill="#f6f6f6"/><rect x="-8.3" y="-1.6" width="3.4" height="9.4" fill="#e2e2e2"/><path d="M-4.6 -1.5 L1.9 -7.6 V2 L-4.6 7.7Z" fill="#80d79d"/><path d="M2.9 -2.2 L7.9 -7.6 V2.2 L2.9 7.7Z" fill="#f5b284"/></g>
<g transform="translate(761.8 1063.8)" opacity=".42"><path d="M-4.4 -7.2 h8.0 M-6.8 -4.800000000000001 v8.0 M-4.4 5.6000000000000005 h4.4 M6.000000000000001 -4.800000000000001 v4.2" stroke="#e8e8e8" stroke-width="1" fill="none"/><rect x="-8.0" y="-8.4" width="2.4" height="2.4" fill="#5bb8f5"/><rect x="4.8" y="-8.4" width="2.4" height="2.4" fill="#5bb8f5"/><rect x="-8.0" y="4.4" width="2.4" height="2.4" fill="#5bb8f5"/><g transform="rotate(-42 4.6 3.8)"><rect x="0.8" y="2.5" width="5.6" height="2.8" fill="#f5c84a"/><rect x="6.4" y="2.5" width="2" height="2.8" rx=".8" fill="#e8504a"/><path d="M0.8 2.5 l-2.4 1.4 2.4 1.4z" fill="#e8dcc0"/></g></g>
<g transform="translate(785.8 1063.8)" opacity=".42"><path d="M-8.1 -7.8 h16.2 l-1.9 12 h-12.4z" fill="#6a9bd8"/><path d="M-8.1 -7.8 l5 5.4 h6.2 l5 -5.4z" fill="#000" opacity=".07"/><circle cx="0" cy="3.6" r="4.3" fill="#d4d4d4" stroke="#4a4f5a" stroke-width=".8"/></g>
<g transform="translate(809.8 1063.8)" opacity=".42"><path d="M-6.6 6 C-6.6 -3 -1 2 0.4 -0.4 C2 -3 6 0 6.4 -7" stroke="#9cc8f0" stroke-width="1.1" fill="none"/><rect x="-7.6" y="5" width="2" height="2" fill="#58c070"/><rect x="5.4" y="-8" width="2" height="2" fill="#58c070"/><path d="M0 -3.4 l1 2.4 2.4 1 -2.4 1 -1 2.4 -1 -2.4 -2.4 -1 2.4 -1z" fill="#f5a24a"/></g>
<g transform="translate(833.7 1063.8)" opacity=".42"><path d="M-6.6 6 C-6.6 -3 -1 2 0.4 -0.4 C2 -3 6 0 6.4 -7" stroke="#9cc8f0" stroke-width="1.1" fill="none"/><rect x="-7.6" y="5" width="2" height="2" fill="#58c070"/><rect x="5.4" y="-8" width="2" height="2" fill="#58c070"/><path d="M0 -3.4 l1 2.4 2.4 1 -2.4 1 -1 2.4 -1 -2.4 -2.4 -1 2.4 -1z" fill="#f5a24a"/></g>
<g transform="translate(857.7 1063.8)" opacity=".42"><path d="M-6.6 6 C-6.6 -3 -1 2 0.4 -0.4 C2 -3 6 0 6.4 -7" stroke="#9cc8f0" stroke-width="1.1" fill="none"/><rect x="-7.6" y="5" width="2" height="2" fill="#58c070"/><rect x="5.4" y="-8" width="2" height="2" fill="#58c070"/><path d="M0 -3.4 l1 2.4 2.4 1 -2.4 1 -1 2.4 -1 -2.4 -2.4 -1 2.4 -1z" fill="#f5a24a"/></g>
<g transform="translate(881.7 1063.8)" opacity=".42"><path d="M-8.3 -1.6 L-2.4 -7.6 H1.9 L-4.5 -1.6Z" fill="#f6f6f6"/><rect x="-8.3" y="-1.6" width="3.4" height="9.4" fill="#e2e2e2"/><path d="M-4.6 -1.5 L1.9 -7.6 V2 L-4.6 7.7Z" fill="#80d79d"/><path d="M2.9 -2.2 L7.9 -7.6 V2.2 L2.9 7.7Z" fill="#f5b284"/></g>
<g transform="translate(905.7 1063.8)" opacity=".42"><path d="M-4.4 -7.2 h8.0 M-6.8 -4.800000000000001 v8.0 M-4.4 5.6000000000000005 h4.4 M6.000000000000001 -4.800000000000001 v4.2" stroke="#e8e8e8" stroke-width="1" fill="none"/><rect x="-8.0" y="-8.4" width="2.4" height="2.4" fill="#5bb8f5"/><rect x="4.8" y="-8.4" width="2.4" height="2.4" fill="#5bb8f5"/><rect x="-8.0" y="4.4" width="2.4" height="2.4" fill="#5bb8f5"/><g transform="rotate(-42 4.6 3.8)"><rect x="0.8" y="2.5" width="5.6" height="2.8" fill="#f5c84a"/><rect x="6.4" y="2.5" width="2" height="2.8" rx=".8" fill="#e8504a"/><path d="M0.8 2.5 l-2.4 1.4 2.4 1.4z" fill="#e8dcc0"/></g></g>
<g transform="translate(929.7 1063.8)" opacity=".42"><path d="M-8.3 -1.6 L-2.4 -7.6 H1.9 L-4.5 -1.6Z" fill="#f6f6f6"/><rect x="-8.3" y="-1.6" width="3.4" height="9.4" fill="#e2e2e2"/><path d="M-4.6 -1.5 L1.9 -7.6 V2 L-4.6 7.7Z" fill="#80d79d"/><path d="M2.9 -2.2 L7.9 -7.6 V2.2 L2.9 7.7Z" fill="#f5b284"/></g>
<g transform="translate(953.7 1063.8)" opacity=".42"><path d="M-4.4 -7.2 h8.0 M-6.8 -4.800000000000001 v8.0 M-4.4 5.6000000000000005 h4.4 M6.000000000000001 -4.800000000000001 v4.2" stroke="#e8e8e8" stroke-width="1" fill="none"/><rect x="-8.0" y="-8.4" width="2.4" height="2.4" fill="#5bb8f5"/><rect x="4.8" y="-8.4" width="2.4" height="2.4" fill="#5bb8f5"/><rect x="-8.0" y="4.4" width="2.4" height="2.4" fill="#5bb8f5"/><g transform="rotate(-42 4.6 3.8)"><rect x="0.8" y="2.5" width="5.6" height="2.8" fill="#f5c84a"/><rect x="6.4" y="2.5" width="2" height="2.8" rx=".8" fill="#e8504a"/><path d="M0.8 2.5 l-2.4 1.4 2.4 1.4z" fill="#e8dcc0"/></g></g>
<g transform="translate(977.7 1063.8)" opacity=".42"><path d="M-8.1 -7.8 h16.2 l-1.9 12 h-12.4z" fill="#f5a870"/><path d="M-8.1 -7.8 l5 5.4 h6.2 l5 -5.4z" fill="#000" opacity=".07"/><circle cx="0" cy="3.6" r="4.3" fill="#d4d4d4" stroke="#4a4f5a" stroke-width=".8"/></g>
<g transform="translate(1001.7 1063.8)" opacity=".42"><path d="M-7.6 -0.6 l7 -5.4 8.2 3.2 -7 5.6z" fill="#dcdcdc"/><path d="M-7.6 -0.6 l8.2 3.4 v4.6 l-8.2 -3.6z" fill="#8fcbf8"/><path d="M0.6 2.8 l7 -5.6 v4.4 l-7 5.8z" fill="#4a9be0"/></g>
<g transform="translate(1025.7 1063.8)" opacity=".42"><path d="M-8.1 -7.8 h16.2 l-1.9 12 h-12.4z" fill="#f5a870"/><path d="M-8.1 -7.8 l5 5.4 h6.2 l5 -5.4z" fill="#000" opacity=".07"/><circle cx="0" cy="3.6" r="4.3" fill="#d4d4d4" stroke="#4a4f5a" stroke-width=".8"/></g>
<g transform="translate(1049.7 1063.8)" opacity=".42"><path d="M-7.6 -0.6 l7 -5.4 8.2 3.2 -7 5.6z" fill="#dcdcdc"/><path d="M-7.6 -0.6 l8.2 3.4 v4.6 l-8.2 -3.6z" fill="#8fcbf8"/><path d="M0.6 2.8 l7 -5.6 v4.4 l-7 5.8z" fill="#4a9be0"/></g>
<g transform="translate(1073.6 1063.8)" opacity=".42"><path d="M-8 -2 C-3 -7 4 -7 8 -2 L5 1 C2 -2 -2 -2 -5 1 Z" fill="#b5defc"/><path d="M-5 1 C-2 -2 2 -2 5 1 L5 6.6 C2 4 -2 4 -5 6.6 Z" fill="#8fcbf8"/><path d="M-8 -2 L-5 1 V6.6 L-8 3.4Z" fill="#6aaee3"/><path d="M5 1 L8 -2 V3.4 L5 6.6Z" fill="#dcdcdc"/><path d="M6.6 -5 C3 -8.4 -3 -8.4 -6.4 -5.6" stroke="#f0f0f0" stroke-width=".9" fill="none"/><path d="M-7.8 -4.4 l1.4 -2.6 1.4 2.2z" fill="#f0f0f0"/></g>
<g transform="translate(1097.6 1063.8)" opacity=".42"><path d="M-6.4 -4.6 l2 -2.8 h11 l-2 2.8z" fill="#8fb5dc"/><rect x="-6.4" y="-4.6" width="11" height="5" fill="#5b8cc0"/><path d="M4.6 -4.6 l2 -2.8 v5 l-2 2.8z" fill="#3f6fa6"/><rect x="-6.4" y="1.4" width="11" height="5.8" fill="#9a9ea8"/><path d="M4.6 1.4 l2 -2.6 v5.6 l-2 2.8z" fill="#7c808a"/></g>
<g transform="translate(1121.6 1063.8)" opacity=".42"><path d="M-2 -7 h8.6 v8 h-8.6z" fill="#5b8cc0"/><path d="M-2 -7 l1.6 -1.4 h8.6 l-1.6 1.4z" fill="#8fb5dc"/><path d="M-7.6 -1 h8.6 v8 h-8.6z" fill="#6a9bd0"/><path d="M-7.6 -1 l1.6 -1.6 h8.6 l-1.6 1.6z" fill="#9cc0e6"/><path d="M1 -1 l1.6 -1.6 v8 l-1.6 1.6z" fill="#46709e"/></g>
<g transform="translate(1145.6 1063.8)" opacity=".42"><path d="M-2 -7 h8.6 v8 h-8.6z" fill="#5b8cc0"/><path d="M-2 -7 l1.6 -1.4 h8.6 l-1.6 1.4z" fill="#8fb5dc"/><path d="M-7.6 -1 h8.6 v8 h-8.6z" fill="#6a9bd0"/><path d="M-7.6 -1 l1.6 -1.6 h8.6 l-1.6 1.6z" fill="#9cc0e6"/><path d="M1 -1 l1.6 -1.6 v8 l-1.6 1.6z" fill="#46709e"/></g>
<g transform="translate(1169.6 1063.8)" opacity=".42"><circle cx="3.6" cy="0" r="4" fill="#7aa2d0"/><path d="M0 0 h-5" stroke="#b0b4be" stroke-width="1.8"/><path d="M-8 0 l4 -3.2 v6.4z" fill="#b0b4be"/></g>
<g transform="translate(1193.6 1063.8)" opacity=".42"><circle cx="3.6" cy="0" r="4" fill="#7aa2d0"/><path d="M0 0 h-5" stroke="#b0b4be" stroke-width="1.8"/><path d="M-8 0 l4 -3.2 v6.4z" fill="#b0b4be"/></g>
<g transform="translate(1217.6 1063.8)" opacity=".42"><path d="M-7 -3 l3.4 -4 h10.4 l-3.4 4z" fill="#c8c8cc"/><rect x="-7" y="-3" width="10.4" height="10" fill="#a8a8ae"/><path d="M3.4 -3 l3.4 -4 v10 l-3.4 4z" fill="#8a8a90"/><path d="M-7.4 -4.8 h5 M2.4 -6 l4 -3" stroke="#58c070" stroke-width="1"/><path d="M1.4 -6.6 l0.9 2.2 2.2 0.9 -2.2 0.9 -0.9 2.2 -0.9 -2.2 -2.2 -0.9 2.2 -0.9z" fill="#f5a24a" stroke="#7a5020" stroke-width=".3"/></g>
<g transform="translate(1241.6 1063.8)" opacity=".42"><path d="M-6.4 -4.6 l2 -2.8 h11 l-2 2.8z" fill="#8fb5dc"/><rect x="-6.4" y="-4.6" width="11" height="5" fill="#5b8cc0"/><path d="M4.6 -4.6 l2 -2.8 v5 l-2 2.8z" fill="#3f6fa6"/><rect x="-6.4" y="1.4" width="11" height="5.8" fill="#9a9ea8"/><path d="M4.6 1.4 l2 -2.6 v5.6 l-2 2.8z" fill="#7c808a"/></g>
<path d="M407.8 1050 h12 v2.4 l-5.2 6.6 v22.6 h-1.6 v-22.6 l-5.2 -6.6z" fill="#d2d2d2"/>
<path d="M1283.20 1067.79 L1283.20 1070.41 L1280.94 1070.55 L1280.20 1072.35 L1281.70 1074.04 L1279.84 1075.90 L1278.15 1074.40 L1276.35 1075.14 L1276.21 1077.40 L1273.59 1077.40 L1273.45 1075.14 L1271.65 1074.40 L1269.96 1075.90 L1268.10 1074.04 L1269.60 1072.35 L1268.86 1070.55 L1266.60 1070.41 L1266.60 1067.79 L1268.86 1067.65 L1269.60 1065.85 L1268.10 1064.16 L1269.96 1062.30 L1271.65 1063.80 L1273.45 1063.06 L1273.59 1060.80 L1276.21 1060.80 L1276.35 1063.06 L1278.15 1063.80 L1279.84 1062.30 L1281.70 1064.16 L1280.20 1065.85 L1280.94 1067.65Z" fill="#a2a7b5"/><circle cx="1274.9" cy="1069.1" r="3.02" fill="#3b4453"/>
<defs><filter id="cb" x="-30%" y="-30%" width="160%" height="160%"><feGaussianBlur stdDeviation="3"/></filter><linearGradient id="cgT" x1="0" y1="0" x2="1" y2="1"><stop offset="0" stop-color="#a4a9b0"/><stop offset="1" stop-color="#b0b4ba"/></linearGradient></defs>
<path d="M1204 268 L1226 288 L1268 272 L1262 262 Z" fill="#1a1e26" opacity=".55" filter="url(#cb)"/>
<polygon points="1198.9,222.5 1236.1,215.3 1266,226.1 1224.7,236.5" fill="#a6aab0" opacity=".8"/>
<polygon points="1198.9,222.5 1224.7,236.5 1224.7,284 1200.5,264.3" fill="#94989f" opacity=".8"/>
<polygon points="1224.7,236.5 1266,226.1 1263.4,269.5 1224.7,284" fill="#9ca0a7" opacity=".8"/>
<path d="M1224.7 236.5 L1224.7 284 M1198.9 222.5 L1224.7 236.5 L1266 226.1" stroke="#c4c7cc" stroke-width=".6" fill="none" opacity=".7"/>
<rect x="1219.4" y="236.4" width="5.4" height="8" fill="#7e828a" opacity=".45"/><rect x="1225" y="236.4" width="7.6" height="7.6" fill="#7e828a" opacity=".35"/>
<text transform="translate(1232.6 261.6) skewY(-14) scale(1 1.05)" font-size="9.6" fill="#656a72" letter-spacing=".3">RIGHT</text>
<text transform="translate(1202.4 248) skewY(38) scale(.62 1.15)" font-size="9.4" fill="#656a72">FRONT</text>
<text transform="translate(1226 225.6) rotate(12) scale(1 .45)" font-size="9" fill="#80858c">TOP</text>
<path d="M1197.5 215.6 L1200.5 264.3" stroke="#2a2ad0" stroke-width="1.4"/>
<path d="M1200.5 264.3 L1230.6 290.4" stroke="#a82c2c" stroke-width="1.4"/>
<text x="1196.4" y="211.4" font-size="11.5" font-weight="bold" fill="#2424c8" text-anchor="middle">Z</text>
<text x="1233.6" y="298.6" font-size="11.5" font-weight="bold" fill="#b5302e" text-anchor="middle">X</text>
<rect x="56.1" y="98" width="1.1" height="990" fill="#fff" opacity=".17"/><rect x="1294.1" y="98" width="1.1" height="990" fill="#fff" opacity=".17"/>
</g>
<rect x="55.6" y="37.699999999999996" width="1240.0" height="1049.6000000000001" rx="10.2" fill="none" stroke="#101012" stroke-width="1"/>
<path d="M56.6 48 a9.5 9.5 0 0 1 9.5 -9.5 H1285.0 a9.5 9.5 0 0 1 9.5 9.5" fill="none" stroke="#7c7c7e" stroke-width="0.9" opacity=".9"/>
</svg>
</body></html>
